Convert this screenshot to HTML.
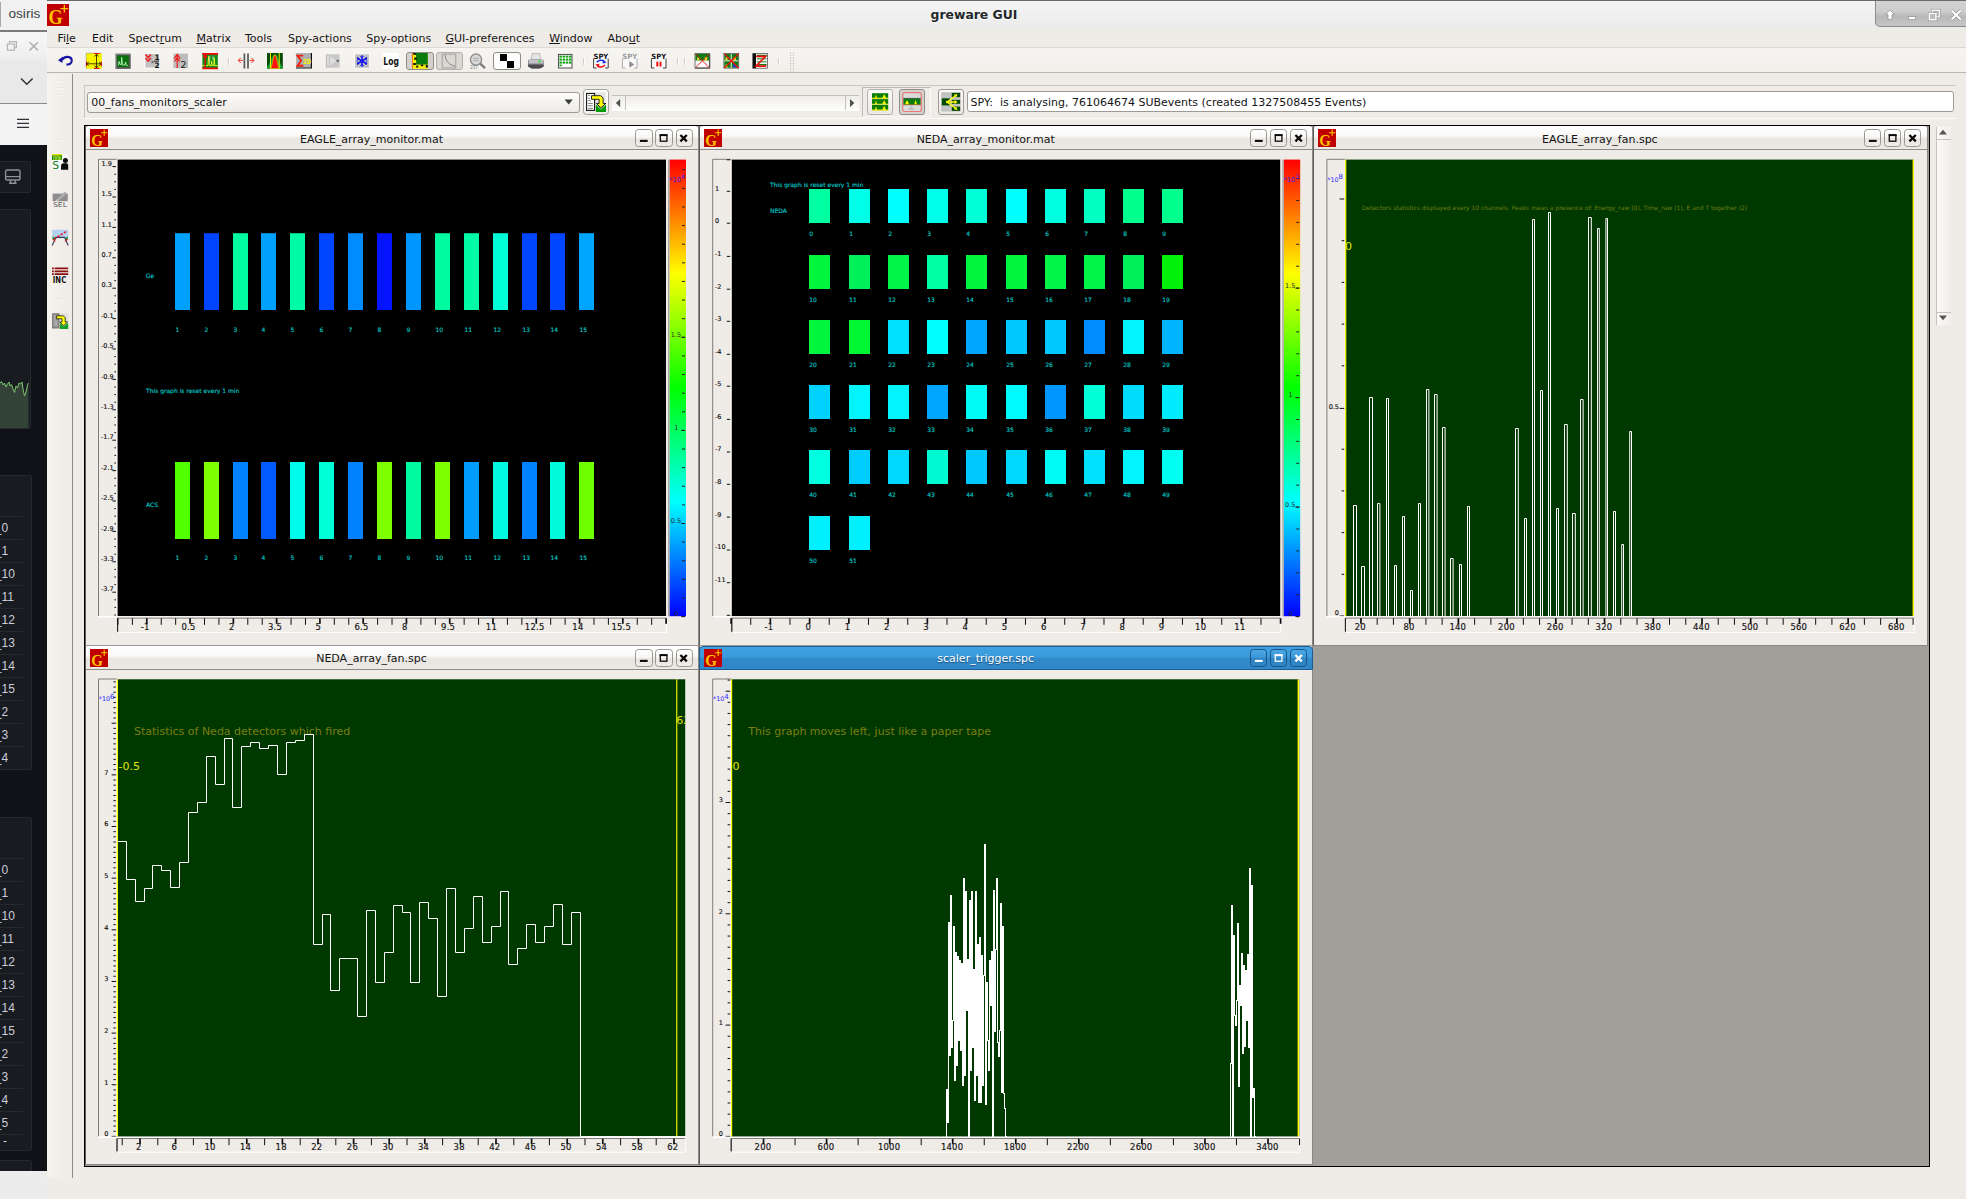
<!DOCTYPE html>
<html><head><meta charset="utf-8"><title>greware GUI</title>
<style>
*{box-sizing:border-box;margin:0;padding:0}
html,body{width:1966px;height:1199px;overflow:hidden}
body{position:relative;background:#efebe7;font-family:"DejaVu Sans","Liberation Sans",sans-serif;font-size:13px;color:#1a1a1a}
.a{position:absolute}
svg{position:absolute;overflow:visible}
svg text{font-family:"DejaVu Sans","Liberation Sans",sans-serif}
.lib{font-family:"Liberation Sans",sans-serif}
u{text-decoration:underline;text-underline-offset:1px}
</style></head><body>
<div class="a" style="left:0;top:0;width:47px;height:30px;background:#f1f1f1"></div>
<div class="a" style="left:0;top:2px;width:1px;height:25px;background:#a8a8a8"></div>
<div class="a lib" style="left:8.5px;top:6px;font-size:13.6px;line-height:16px;color:#3c4043">osiris</div>
<div class="a" style="left:0;top:30px;width:47px;height:1.5px;background:#7a7a7a"></div>
<div class="a" style="left:0;top:31.5px;width:47px;height:72px;background:linear-gradient(#f6f6f6 0,#f1f1f1 30%,#e9e9e9 42%,#e9e9e9 100%)"></div>
<svg style="left:0;top:31px" width="47" height="72" viewBox="0 31 47 72" fill="none"><path d="M9.5 43.5V41.6H16.4V47.6H14.5" stroke="#b4b4b4" stroke-width="1.2"/><rect x="7.4" y="44" width="7" height="6.2" stroke="#b4b4b4" stroke-width="1.2"/><path d="M29.5 42.2L38 50.4M38 42.2L29.5 50.4" stroke="#b0b0b0" stroke-width="1.5"/><path d="M21 78.5L26.8 84.3L32.6 78.5" stroke="#2f3337" stroke-width="1.5"/></svg>
<div class="a" style="left:0;top:103px;width:47px;height:1px;background:#8a8a8a"></div>
<div class="a" style="left:0;top:104px;width:47px;height:41px;background:#f4f4f4"></div>
<svg style="left:0;top:104px" width="47" height="41" viewBox="0 104 47 41"><path d="M17 119.4H29M17 123.4H29M17 127.4H29" stroke="#2f3337" stroke-width="1.4"/></svg>
<div class="a" style="left:0;top:145px;width:47px;height:1026px;background:#111217"></div>
<div class="a" style="left:0;top:1171px;width:47px;height:28px;background:#ececec"></div>
<div class="a" style="left:-2px;top:161px;width:33px;height:32px;background:#181b1f;border:1px solid #25282d;border-radius:2px"></div>
<svg style="left:0;top:161px" width="31" height="32" viewBox="0 161 31 32" fill="none" stroke="#8e9099" stroke-width="1.4"><rect x="5.6" y="170" width="14.4" height="10" rx="1.8"/><path d="M5.6 176.6H20M10.5 180.2V183M15.2 180.2V183M9 183.3H16.6"/></svg>
<div class="a" style="left:-2px;top:209px;width:33px;height:220px;background:#181b1f;border:1px solid #25282d;border-radius:2px"></div>
<svg style="left:0;top:370px" width="30" height="58" viewBox="0 370 30 58"><polygon points="0,383 1.5,381.5 3,385 4.5,383 6,387 7.5,384 9,382 10,386 11.5,384.5 13,389 14.5,392.5 16,386 17.5,388 19,383 20.5,384 22,382 23,389 24.5,396 26,392 27.5,385 28.5,383 28.5,428 0,428" fill="#334236"/><polyline points="0,383 1.5,381.5 3,385 4.5,383 6,387 7.5,384 9,382 10,386 11.5,384.5 13,389 14.5,392.5 16,386 17.5,388 19,383 20.5,384 22,382 23,389 24.5,396 26,392 27.5,385 28.5,383" fill="none" stroke="#7dc26f" stroke-width="1"/></svg>
<div class="a" style="left:-2px;top:475px;width:33.5px;height:294.5px;background:#181b1f;border:1px solid #25282d;border-radius:2px"></div>
<div class="a" style="left:0;top:515.5px;width:23px;height:1px;background:#26292e"></div>
<div class="a lib" style="left:-5.2px;top:520.9px;font-size:12px;line-height:14px;color:#ccccdc;white-space:nowrap">_0</div>
<div class="a" style="left:0;top:538.5px;width:23px;height:1px;background:#26292e"></div>
<div class="a lib" style="left:-5.2px;top:543.9px;font-size:12px;line-height:14px;color:#ccccdc;white-space:nowrap">_1</div>
<div class="a" style="left:0;top:561.5px;width:23px;height:1px;background:#26292e"></div>
<div class="a lib" style="left:-5.2px;top:566.9px;font-size:12px;line-height:14px;color:#ccccdc;white-space:nowrap">_10</div>
<div class="a" style="left:0;top:584.5px;width:23px;height:1px;background:#26292e"></div>
<div class="a lib" style="left:-5.2px;top:589.9px;font-size:12px;line-height:14px;color:#ccccdc;white-space:nowrap">_11</div>
<div class="a" style="left:0;top:607.5px;width:23px;height:1px;background:#26292e"></div>
<div class="a lib" style="left:-5.2px;top:612.9px;font-size:12px;line-height:14px;color:#ccccdc;white-space:nowrap">_12</div>
<div class="a" style="left:0;top:630.5px;width:23px;height:1px;background:#26292e"></div>
<div class="a lib" style="left:-5.2px;top:635.9px;font-size:12px;line-height:14px;color:#ccccdc;white-space:nowrap">_13</div>
<div class="a" style="left:0;top:653.5px;width:23px;height:1px;background:#26292e"></div>
<div class="a lib" style="left:-5.2px;top:658.9px;font-size:12px;line-height:14px;color:#ccccdc;white-space:nowrap">_14</div>
<div class="a" style="left:0;top:676.5px;width:23px;height:1px;background:#26292e"></div>
<div class="a lib" style="left:-5.2px;top:681.9px;font-size:12px;line-height:14px;color:#ccccdc;white-space:nowrap">_15</div>
<div class="a" style="left:0;top:699.5px;width:23px;height:1px;background:#26292e"></div>
<div class="a lib" style="left:-5.2px;top:704.9px;font-size:12px;line-height:14px;color:#ccccdc;white-space:nowrap">_2</div>
<div class="a" style="left:0;top:722.5px;width:23px;height:1px;background:#26292e"></div>
<div class="a lib" style="left:-5.2px;top:727.9px;font-size:12px;line-height:14px;color:#ccccdc;white-space:nowrap">_3</div>
<div class="a" style="left:0;top:745.5px;width:23px;height:1px;background:#26292e"></div>
<div class="a lib" style="left:-5.2px;top:750.9px;font-size:12px;line-height:14px;color:#ccccdc;white-space:nowrap">_4</div>
<div class="a" style="left:-2px;top:817px;width:33.5px;height:333.5px;background:#181b1f;border:1px solid #25282d;border-radius:2px"></div>
<div class="a" style="left:0;top:857.8px;width:23px;height:1px;background:#26292e"></div>
<div class="a lib" style="left:-5.2px;top:863.2px;font-size:12px;line-height:14px;color:#ccccdc;white-space:nowrap">_0</div>
<div class="a" style="left:0;top:880.8px;width:23px;height:1px;background:#26292e"></div>
<div class="a lib" style="left:-5.2px;top:886.2px;font-size:12px;line-height:14px;color:#ccccdc;white-space:nowrap">_1</div>
<div class="a" style="left:0;top:903.8px;width:23px;height:1px;background:#26292e"></div>
<div class="a lib" style="left:-5.2px;top:909.2px;font-size:12px;line-height:14px;color:#ccccdc;white-space:nowrap">_10</div>
<div class="a" style="left:0;top:926.8px;width:23px;height:1px;background:#26292e"></div>
<div class="a lib" style="left:-5.2px;top:932.2px;font-size:12px;line-height:14px;color:#ccccdc;white-space:nowrap">_11</div>
<div class="a" style="left:0;top:949.8px;width:23px;height:1px;background:#26292e"></div>
<div class="a lib" style="left:-5.2px;top:955.2px;font-size:12px;line-height:14px;color:#ccccdc;white-space:nowrap">_12</div>
<div class="a" style="left:0;top:972.8px;width:23px;height:1px;background:#26292e"></div>
<div class="a lib" style="left:-5.2px;top:978.2px;font-size:12px;line-height:14px;color:#ccccdc;white-space:nowrap">_13</div>
<div class="a" style="left:0;top:995.8px;width:23px;height:1px;background:#26292e"></div>
<div class="a lib" style="left:-5.2px;top:1001.2px;font-size:12px;line-height:14px;color:#ccccdc;white-space:nowrap">_14</div>
<div class="a" style="left:0;top:1018.8px;width:23px;height:1px;background:#26292e"></div>
<div class="a lib" style="left:-5.2px;top:1024.2px;font-size:12px;line-height:14px;color:#ccccdc;white-space:nowrap">_15</div>
<div class="a" style="left:0;top:1041.8px;width:23px;height:1px;background:#26292e"></div>
<div class="a lib" style="left:-5.2px;top:1047.2px;font-size:12px;line-height:14px;color:#ccccdc;white-space:nowrap">_2</div>
<div class="a" style="left:0;top:1064.8px;width:23px;height:1px;background:#26292e"></div>
<div class="a lib" style="left:-5.2px;top:1070.2px;font-size:12px;line-height:14px;color:#ccccdc;white-space:nowrap">_3</div>
<div class="a" style="left:0;top:1087.8px;width:23px;height:1px;background:#26292e"></div>
<div class="a lib" style="left:-5.2px;top:1093.2px;font-size:12px;line-height:14px;color:#ccccdc;white-space:nowrap">_4</div>
<div class="a" style="left:0;top:1110.8px;width:23px;height:1px;background:#26292e"></div>
<div class="a lib" style="left:-5.2px;top:1116.2px;font-size:12px;line-height:14px;color:#ccccdc;white-space:nowrap">_5</div>
<div class="a" style="left:0;top:1133.8px;width:23px;height:1px;background:#26292e"></div>
<div class="a lib" style="left:3px;top:1134px;font-size:12px;line-height:14px;color:#ccccdc">-</div>
<div class="a" style="left:-2px;top:1159.5px;width:33.5px;height:14px;background:#181b1f;border:1px solid #25282d;border-radius:2px"></div>
<div class="a" style="left:0;top:1170.7px;width:47px;height:29px;background:#ececec"></div>
<div class="a" style="left:47px;top:0;width:1919px;height:28.5px;background:linear-gradient(#f4f4f4 0,#f0f0f0 45%,#ebebea 100%)"></div>
<div class="a" style="left:47px;top:0;width:1919px;height:1px;background:#6a6a6a"></div>
<div class="a" style="left:774px;top:7px;width:400px;text-align:center;font-weight:bold;font-size:12.4px;line-height:16px;color:#23272a;text-shadow:0 1px 0 #fff">greware GUI</div>
<div class="a" style="left:1875px;top:1px;width:100px;height:25.5px;border:1px solid #8c8c8c;border-top:none;border-radius:0 0 0 5px;background:linear-gradient(#d2d2d2 0,#cdcdcd 40%,#b9b9b9 62%,#c6c6c6 100%)"></div>
<svg style="left:1875px;top:0" width="91" height="28" viewBox="1875 0 91 28"><path d="M1890 10L1885.4 14.6H1888V19.4H1892V14.6H1894.6Z" fill="#fff" stroke="#8a8a8a" stroke-width="0.7" stroke-linejoin="round"/><rect x="1908.3" y="16.5" width="7.4" height="3" fill="#fff" stroke="#8a8a8a" stroke-width="0.7"/><rect x="1932.4" y="10.2" width="6.8" height="6.6" fill="none" stroke="#8a8a8a" stroke-width="2.5"/><rect x="1932.4" y="10.2" width="6.8" height="6.6" fill="none" stroke="#fff" stroke-width="1.4"/><rect x="1929.2" y="13.4" width="6.8" height="6.4" fill="#c4c4c4" stroke="#8a8a8a" stroke-width="2.5"/><rect x="1929.2" y="13.4" width="6.8" height="6.4" fill="#bcbcbc" stroke="#fff" stroke-width="1.4"/><path d="M1951.6 10.4L1960.8 19.6M1960.8 10.4L1951.6 19.6" stroke="#8a8a8a" stroke-width="3.2"/><path d="M1951.6 10.4L1960.8 19.6M1960.8 10.4L1951.6 19.6" stroke="#fff" stroke-width="2.1"/></svg>
<svg style="left:47px;top:4px" width="22" height="22" viewBox="0 0 22 22"><g transform="translate(0,0) scale(1.22222)"><rect x="0" y="0" width="18" height="18" fill="#c00000"/><text x="1.2" y="16.6" font-family="'Liberation Serif',serif" font-size="17.5" font-weight="bold" fill="#ffc400" textLength="11.6" lengthAdjust="spacingAndGlyphs" style="font-family:'Liberation Serif',serif">G</text><path d="M14.2 0.6V7M11 3.8H17.4" stroke="#ffc400" stroke-width="1.1"/></g></svg>
<div class="a" style="left:47px;top:28.5px;width:1919px;height:19px;background:#efebe7"></div>
<div class="a" style="left:57.4px;top:32px;font-size:11px;line-height:14px;white-space:nowrap;color:#141414">Fi<u>l</u>e</div>
<div class="a" style="left:92px;top:32px;font-size:11px;line-height:14px;white-space:nowrap;color:#141414">Edit</div>
<div class="a" style="left:128.6px;top:32px;font-size:11px;line-height:14px;white-space:nowrap;color:#141414">Spect<u>r</u>um</div>
<div class="a" style="left:196.4px;top:32px;font-size:11px;line-height:14px;white-space:nowrap;color:#141414"><u>M</u>atrix</div>
<div class="a" style="left:245px;top:32px;font-size:11px;line-height:14px;white-space:nowrap;color:#141414">Tools</div>
<div class="a" style="left:288px;top:32px;font-size:11px;line-height:14px;white-space:nowrap;color:#141414">Spy-actions</div>
<div class="a" style="left:366.2px;top:32px;font-size:11px;line-height:14px;white-space:nowrap;color:#141414">Spy-options</div>
<div class="a" style="left:445.5px;top:32px;font-size:11px;line-height:14px;white-space:nowrap;color:#141414"><u>G</u>UI-preferences</div>
<div class="a" style="left:549.2px;top:32px;font-size:11px;line-height:14px;white-space:nowrap;color:#141414"><u>W</u>indow</div>
<div class="a" style="left:607.6px;top:32px;font-size:11px;line-height:14px;white-space:nowrap;color:#141414">Abo<u>u</u>t</div>
<div class="a" style="left:47px;top:47px;width:1919px;height:25.6px;background:linear-gradient(#f7f5f1,#f3f0ec);border-top:1px solid #dcd8d3;border-bottom:1px solid #b9b5b0"></div>
<div class="a" style="left:406px;top:52px;width:28px;height:18px;border:1px solid #8f8c88;border-radius:3px;background:#d4d1cd"></div>
<div class="a" style="left:435.5px;top:52px;width:27.5px;height:18px;border:1px solid #b3b0ac;border-radius:3px;background:#dbd8d4"></div>
<div class="a" style="left:493px;top:52px;width:28px;height:18px;border:1px solid #8f8c88;border-radius:3px;background:#fdfdfd"></div>
<svg style="left:0;top:48px" width="1966" height="25" viewBox="0 48 1966 25"><g transform="translate(57,53) scale(1)"><path d="M1 7.3L5.8 3.4L5.4 9.9Z" fill="#1414a0"/><path d="M5 6.9C6.6 4.6 8.8 3.8 10.6 3.9C13.4 4.2 14.9 6 14.7 7.9C14.4 10.2 12.6 11.8 9.4 11.4" stroke="#1414a0" stroke-width="2.1" fill="none"/></g><g transform="translate(86,53) scale(1)"><rect x="0" y="0" width="15.8" height="15.8" fill="#f8f400"/><path d="M0.2 15.8V0.2H15.8" stroke="#8a8aa8" stroke-width="0.5" fill="none"/><path d="M8 0.5H13.4M8 15.4H13.4M0.5 8.4V13.2M15.4 8.4V13.2" stroke="#f01010" stroke-width="1.1"/><path d="M10.5 1.2V14.8M0.6 10.8H15.2M8.6 3.4L10.5 1.2L12.4 3.4M8.6 12.6L10.5 14.8L12.4 12.6M2.8 9L0.6 10.8L2.8 12.6M13 9L15.2 10.8L13 12.6" stroke="#141400" stroke-width="0.8" fill="none"/></g><g transform="translate(115.5,53) scale(1)"><rect x="0.2" y="0.9" width="15" height="15" fill="#5a5a5a"/><path d="M0.2 15.9V0.9H15.2" stroke="#a8a8a8" stroke-width="1.2" fill="none"/><rect x="1.7" y="2.4" width="11.6" height="11.6" fill="#0a700c"/><path d="M2.8 12.4L3.6 8.4L4.6 11.6H5.8L6.2 4.4L7 12H9.6L10 9L10.8 12.4H12.4" stroke="#c8ffc8" stroke-width="0.8" fill="none"/></g><g transform="translate(144.4,53) scale(1)"><rect x="0.6" y="0.6" width="14.6" height="14.4" fill="#c2c2c2" stroke="#fff" stroke-width="0.8"/><path d="M1 1.4L3.8 4.6L6.6 1.4M1 5L3.8 8.2L6.6 5" stroke="#f01818" stroke-width="1.5" fill="none"/><text x="10" y="7.4" font-size="7.4" font-weight="bold" fill="#111">1</text><text x="10" y="15" font-size="7.4" font-weight="bold" fill="#111">2</text><path d="M9.6 8.2H14.8" stroke="#111" stroke-width="0.9"/><path d="M7 7.8L9.2 10.2M9.2 7.8L7 10.2" stroke="#333" stroke-width="0.7"/></g><g transform="translate(173,53) scale(1)"><rect x="0.4" y="0.6" width="14.6" height="14.6" fill="#bcbcbc"/><path d="M4.2 15V1.4M1.2 5.6L4.2 1.2L7.2 5.6M1.6 8.4L4.2 4.8L6.8 8.4" stroke="#f01818" stroke-width="1.2" fill="none"/><text x="7.6" y="14.8" font-size="9.4" fill="#1a1a1a">2</text></g><g transform="translate(202,53) scale(1)"><rect x="0.4" y="1" width="15.4" height="14" fill="#0e8a14"/><path d="M0.2 0.9H16M0.2 15.3H16" stroke="#f00808" stroke-width="1.7"/><path d="M3.2 1.4V15M1.2 4.4L3.2 1.6L5.2 4.4" stroke="#f00808" stroke-width="1.3" fill="none"/><path d="M0.4 12.6H2.4M4 12.6H6L6.6 3.4L7.4 12.6H9.2L9.6 8L10.2 12.6H11.8L12.2 4.6L12.8 12.6H15.6" stroke="#f0ff30" stroke-width="0.9" fill="none"/><path d="M7.8 2.6V9M11 2.6V7" stroke="#e8e8e8" stroke-width="0.7"/></g><g transform="translate(238,53) scale(1)"><path d="M6.4 0.4V15.6M10 0.4V15.6" stroke="#585858" stroke-width="1.7"/><path d="M0.3 7.4H4.9M15.9 7.4H11.6M2.8 4.8L0.3 7.4L2.8 10M13.4 4.8L15.9 7.4L13.4 10" stroke="#f01818" stroke-width="0.9" fill="none"/></g><g transform="translate(267,53) scale(1)"><rect x="0" y="0" width="15.8" height="15.6" fill="#064a08"/><path d="M0 15.6V13.4C3 12.6 4.4 1 7.9 1S12.8 12.6 15.8 13.4V15.6Z" fill="#18a028"/><path d="M3.5 0V15.6M12.2 0V15.6" stroke="#f0f000" stroke-width="1"/><path d="M3.6 15.6C5.6 12 6.2 1.8 7.9 1.8S10.2 12 12.2 15.6Z" fill="#ff1010" stroke="#f0e000" stroke-width="0.6"/></g><g transform="translate(295.8,53) scale(1)"><rect x="0.3" y="0" width="15.3" height="14.6" fill="#b0b0b0"/><path d="M0.2 15H15.6V0" stroke="#111" stroke-width="1.2" fill="none"/><path d="M7.4 2.6H1.6L5.4 7.6L1.6 12.8H7.6" stroke="#f02010" stroke-width="1.9" fill="none"/><text x="7.2" y="10.8" font-size="7" font-weight="bold" fill="#f4f400" textLength="8" lengthAdjust="spacingAndGlyphs">2D</text></g><g transform="translate(325.5,53) scale(1)"><rect x="0.3" y="1.3" width="13.8" height="13.4" fill="#c8c8c8"/><rect x="1.5" y="2" width="2" height="11.4" fill="#eeeeee" stroke="#a0a0a0" stroke-width="0.5"/><path d="M4.4 3L11 7.9L4.4 12.8Z" fill="#dedede"/><rect x="11" y="6.8" width="2.6" height="2" fill="#6a6a6a"/></g><g transform="translate(354,53) scale(1)"><rect x="0.6" y="0.8" width="14.8" height="14.4" fill="#c0c0c0" stroke="#fff" stroke-width="0.9"/><g stroke="#1818f0" stroke-width="1.5" fill="none"><path d="M8 2.2V13.8M3 5L13 11M13 5L3 11"/><path d="M6.4 3.2L8 4.8L9.6 3.2M6.4 12.8L8 11.2L9.6 12.8M2.8 7.4L5 6.2L3.6 4M13.2 7.4L11 6.2L12.4 4M2.8 8.6L5 9.8L3.6 12M13.2 8.6L11 9.8L12.4 12" stroke-width="1"/></g><circle cx="8" cy="8" r="1.6" fill="#1818f0"/></g><g transform="translate(382.8,53) scale(1)"><rect x="0.3" y="0" width="16" height="16" fill="#ffffff"/><text x="0.5" y="11.9" font-size="9.8" font-weight="bold" fill="#111" textLength="15.6" lengthAdjust="spacingAndGlyphs">Log</text></g><g transform="translate(411.8,53) scale(1)"><rect x="0.3" y="0" width="15.7" height="15.8" fill="#f4f000"/><rect x="4.3" y="0" width="11.7" height="11.6" fill="#0a7c0e"/><path d="M0.6 0V15.8" stroke="#f01010" stroke-width="0.6"/><rect x="1.4" y="0" width="3" height="1.8" fill="#111"/><rect x="2.4" y="4.6" width="2.6" height="2.2" fill="#111"/><rect x="1.4" y="10" width="2.6" height="2" fill="#111"/><rect x="4.4" y="12.6" width="2" height="2" fill="#111"/><rect x="9" y="11.6" width="2.4" height="1.6" fill="#111"/><rect x="14" y="12" width="2" height="2.6" fill="#111"/></g><g transform="translate(441.6,53.2) scale(1)"><rect x="0.6" y="0.9" width="13.6" height="13.8" fill="none" stroke="#9c9a98" stroke-width="0.9"/><path d="M3.4 1.4C4 8 7.4 12 13.6 12.8" stroke="#8c8a88" stroke-width="1" fill="none"/></g><g transform="translate(469.4,53) scale(1)"><circle cx="6.6" cy="6.6" r="5.6" fill="#dadada" stroke="#8e8e8e" stroke-width="1.4"/><path d="M10.8 10.6L15.6 15.2" stroke="#7e7e7e" stroke-width="2.4"/><text x="0.4" y="16.4" font-size="5.4" fill="#8a8a8a">2D</text><path d="M3.6 5.4H9.6M3.6 7.6H9.6" stroke="#b4b4b4" stroke-width="1.2"/></g><g transform="translate(500,54) scale(1)"><rect x="0" y="0" width="14" height="14" fill="#fff"/><rect x="0" y="0" width="7" height="7" fill="#000"/><rect x="7" y="7" width="7" height="7" fill="#000"/></g><g transform="translate(527.8,53) scale(1)"><path d="M4.4 0.6H11.8L12.8 6.6H3.2Z" fill="#e6e6e6" stroke="#9a9a9a" stroke-width="0.6"/><path d="M1.4 6.4Q0.2 6.6 0.2 8V12.6Q0.2 14 1.6 14.2L4 15.6H12L14.6 14.2Q16 14 16 12.6V8Q16 6.6 14.6 6.4Z" fill="#8e8e92"/><path d="M1.2 7H15V10.4H1.2Z" fill="#c2c2c8"/><path d="M0.4 11.4H15.8V13.4Q15.8 14.2 14.6 14.2L12 15.6H4L1.6 14.2Q0.4 14.2 0.4 13.4Z" fill="#4a4a50"/><circle cx="11.6" cy="8.4" r="1.2" fill="#30e040"/></g><g transform="translate(558,54) scale(1)"><rect x="0.4" y="0.4" width="13.6" height="13.6" fill="#fdfdfd" stroke="#3c3c3c" stroke-width="0.9"/><g fill="#12a012"><rect x="1.4" y="1.6" width="2.5" height="2"/><rect x="4.6" y="1.6" width="2.5" height="2"/><rect x="7.8" y="1.6" width="2.5" height="2"/><rect x="11" y="1.6" width="2.5" height="2"/><rect x="1.4" y="4.6" width="2.5" height="2"/><rect x="4.6" y="4.6" width="2.5" height="2"/><rect x="7.8" y="4.6" width="2.5" height="2"/><rect x="11" y="4.6" width="2.5" height="2"/><rect x="1.4" y="7.6" width="2.5" height="2"/><rect x="4.6" y="7.6" width="2.5" height="2"/><rect x="7.8" y="7.6" width="2.5" height="2"/><rect x="11" y="7.6" width="2.5" height="2"/><rect x="1.4" y="10.6" width="2.5" height="1.6"/></g></g><g transform="translate(593.2,53) scale(1)"><rect x="0.4" y="0.4" width="14.6" height="14.8" fill="#f8f8f8"/><path d="M0.4 5.6V15H3.4M15 5.6V15H12" stroke="#111" stroke-width="0.8" fill="none"/><text x="0.3" y="6.3" font-size="7.2" font-weight="bold" fill="#111" textLength="14.8" lengthAdjust="spacingAndGlyphs">SPY</text><path d="M3.6 9.4C5.2 6.8 9.4 6.8 11.2 8.6" stroke="#1a2ce0" stroke-width="1.5" fill="none"/><path d="M10 6.8L13.4 9.8L9.4 10.6Z" fill="#1a2ce0"/><path d="M11.6 11.8C10 14.6 5.8 14.6 4.2 12.8" stroke="#f01010" stroke-width="1.5" fill="none"/><path d="M5.6 14.6L2 11.6L6.2 10.8Z" fill="#f01010"/></g><g transform="translate(622,53) scale(1)"><rect x="0.4" y="0.4" width="14.6" height="14.8" fill="#f8f8f8"/><path d="M0.4 5.6V15H3.4M15 5.6V15H12" stroke="#9a9a9a" stroke-width="0.8" fill="none"/><text x="0.3" y="6.3" font-size="7.2" font-weight="bold" fill="#9a9a9a" textLength="14.8" lengthAdjust="spacingAndGlyphs">SPY</text><path d="M7.4 8L12.2 11.4L7.4 14.8Z" fill="#8a8a8a"/></g><g transform="translate(651,53) scale(1)"><rect x="0.4" y="0.4" width="14.6" height="14.8" fill="#f8f8f8"/><path d="M0.4 5.6V15H3.4M15 5.6V15H12" stroke="#111" stroke-width="0.8" fill="none"/><text x="0.3" y="6.3" font-size="7.2" font-weight="bold" fill="#111" textLength="14.8" lengthAdjust="spacingAndGlyphs">SPY</text><path d="M6.3 8.8V13.4M9.5 8.8V13.4" stroke="#f01010" stroke-width="2"/></g><g transform="translate(694.6,53) scale(1)"><rect x="0.4" y="0.5" width="14.6" height="14.4" fill="#fafafa" stroke="#555" stroke-width="0.8"/><rect x="0.8" y="0.9" width="13.8" height="6.6" fill="#0e7e14"/><path d="M2.6 7.5V4.4H4.6V7.5M10 7.5V4H12.6V7.5" fill="#e8e020"/><path d="M0.6 15.2H15.2V0.8" stroke="#444" stroke-width="0.9" fill="none"/><path d="M1 1L14.6 14.6M14.6 1L1 14.6" stroke="#f01010" stroke-width="0.9"/></g><g transform="translate(723.5,53) scale(1)"><rect x="0.4" y="0.5" width="14.8" height="14.6" fill="#f4f4f4" stroke="#555" stroke-width="0.8"/><rect x="0.8" y="0.9" width="6.4" height="6.4" fill="#0e7e14"/><rect x="8.2" y="0.9" width="6.6" height="6.4" fill="#0e7e14"/><rect x="0.8" y="8.3" width="6.4" height="6.4" fill="#0e7e14"/><rect x="8.2" y="8.3" width="6.6" height="6.4" fill="#0e7e14"/><path d="M2 7.3V4.4H4V7.3M10 7.3V4H12.4V7.3M2 14.7V11.6H4V14.7" fill="#e8e020"/><path d="M9.6 14.2V10L13.4 14.2Z" fill="#1a30e0"/><path d="M0.8 0.8L15 15M15 0.8L0.8 15" stroke="#f01010" stroke-width="1.3"/></g><g transform="translate(752.6,53) scale(1)"><rect x="0.2" y="0.6" width="14.8" height="14.6" fill="#f6f6f6" stroke="#444" stroke-width="0.7"/><rect x="0.2" y="0.6" width="3.2" height="14.6" fill="#0c0c0c"/><path d="M4.4 2.6H14M4.4 11.8H14" stroke="#0e7e14" stroke-width="1.6"/><path d="M4.4 5.6H14M4.4 8.8H14" stroke="#58b060" stroke-width="1.6"/><path d="M3.6 3.4H12.8L3.4 13.2H13.6" stroke="#f01010" stroke-width="1.7" fill="none"/></g><path d="M228.4 58V65" stroke="#cfcbc6" stroke-width="1"/><path d="M229.4 58V65" stroke="#fff" stroke-width="1"/><path d="M583.6 58V65" stroke="#cfcbc6" stroke-width="1"/><path d="M584.6 58V65" stroke="#fff" stroke-width="1"/><path d="M677.6 58V65" stroke="#cfcbc6" stroke-width="1"/><path d="M678.6 58V65" stroke="#fff" stroke-width="1"/><path d="M684.6 58V65" stroke="#cfcbc6" stroke-width="1"/><path d="M685.6 58V65" stroke="#fff" stroke-width="1"/><path d="M778.6 58V65" stroke="#cfcbc6" stroke-width="1"/><path d="M779.6 58V65" stroke="#fff" stroke-width="1"/><rect x="790.2" y="52.6" width="1" height="1" fill="#b0aca7"/><rect x="792.8" y="52.6" width="1" height="1" fill="#b0aca7"/><rect x="790.2" y="55.15" width="1" height="1" fill="#b0aca7"/><rect x="792.8" y="55.15" width="1" height="1" fill="#b0aca7"/><rect x="790.2" y="57.7" width="1" height="1" fill="#b0aca7"/><rect x="792.8" y="57.7" width="1" height="1" fill="#b0aca7"/><rect x="790.2" y="60.25" width="1" height="1" fill="#b0aca7"/><rect x="792.8" y="60.25" width="1" height="1" fill="#b0aca7"/><rect x="790.2" y="62.8" width="1" height="1" fill="#b0aca7"/><rect x="792.8" y="62.8" width="1" height="1" fill="#b0aca7"/><rect x="790.2" y="65.35" width="1" height="1" fill="#b0aca7"/><rect x="792.8" y="65.35" width="1" height="1" fill="#b0aca7"/><rect x="790.2" y="67.9" width="1" height="1" fill="#b0aca7"/><rect x="792.8" y="67.9" width="1" height="1" fill="#b0aca7"/><rect x="790.2" y="70.45" width="1" height="1" fill="#b0aca7"/><rect x="792.8" y="70.45" width="1" height="1" fill="#b0aca7"/></svg>
<div class="a" style="left:47px;top:73.5px;width:25.5px;height:1104.5px;background:linear-gradient(90deg,#f6f2ec,#f1ede8 60%,#efebe7);border-right:1px solid #8e8b87"></div>
<svg style="left:0;top:73px" width="80" height="300" viewBox="0 73 80 300"><path d="M57 81.6H63.4" stroke="#fff" stroke-width="1"/><path d="M57 80.8H63.4" stroke="#dcd8d3" stroke-width="0.6"/><path d="M57 88.6H63.4" stroke="#fff" stroke-width="1"/><path d="M57 87.8H63.4" stroke="#dcd8d3" stroke-width="0.6"/><path d="M57 95.6H63.4" stroke="#fff" stroke-width="1"/><path d="M57 94.8H63.4" stroke="#dcd8d3" stroke-width="0.6"/><path d="M57 140.6H63.4" stroke="#fff" stroke-width="1"/><path d="M57 139.8H63.4" stroke="#dcd8d3" stroke-width="0.6"/><path d="M57 299.8H63.4" stroke="#fff" stroke-width="1"/><path d="M57 299H63.4" stroke="#dcd8d3" stroke-width="0.6"/><g transform="translate(52,154) scale(1)"><rect x="0" y="0" width="16.2" height="16" fill="#f6f6f6"/><rect x="0" y="0" width="10" height="6" fill="#0e7e14"/><path d="M0 0.7H10" stroke="#f0e800" stroke-width="1.4"/><path d="M1.6 6V2.4H3.4V6M4.8 6V2H6.2V6M7.4 6V2.8H8.8V6" stroke="#e8ff30" stroke-width="0.7" fill="none"/><text x="0.3" y="15.4" font-size="10.8" fill="#0e7e14">S</text><circle cx="13.4" cy="6.4" r="2.5" fill="#0a0a0a"/><path d="M9 15.8V12.4Q9 9.2 11.6 9.2H14.4Q16.2 9.2 16.2 11V15.8Z" fill="#0a0a0a"/></g><g transform="translate(52.2,191.6) scale(1)"><rect x="0.4" y="2" width="15.2" height="7.6" fill="#8e8e8e"/><path d="M10.4 2L12.4 0.4L14.6 2Z" fill="#8e8e8e"/><path d="M3.8 8.8L11.8 1.2L13.4 2.8L5.4 9.6Z" fill="#b4b4b4"/><path d="M3.6 9.2L4.2 7.8L5.2 9Z" fill="#f4f4f4"/><text x="0.8" y="15.9" font-size="6.4" fill="#555" textLength="14" lengthAdjust="spacingAndGlyphs">SEL</text></g><g transform="translate(52.2,229.8) scale(1)"><rect x="0" y="0" width="16" height="8.4" fill="#b4d2f0"/><path d="M0 15.6L3.6 7.6H12.4L16 15.6" stroke="#3a3a5a" stroke-width="1.1" fill="none"/><path d="M2 9L14.4 1.4" stroke="#e01020" stroke-width="1.6" stroke-dasharray="2.4 1.4"/><path d="M0.4 6.4L3 8.8L0.4 10.4ZM15.6 6.4L13 8.8L15.6 10.4Z" fill="#18902a"/><path d="M1 9.4L3 11.6M15 9.4L13 11.6" stroke="#e01020" stroke-width="1.2"/></g><g transform="translate(52,267.4) scale(1)"><path d="M2.6 1H16.2M2.6 3.9H16.2M2.6 6.8H16.2" stroke="#8a1010" stroke-width="1.7"/><path d="M0 1H1.8M0 3.9H1.8M0 6.8H1.8" stroke="#8a1010" stroke-width="1.7"/><text x="0.8" y="15.9" font-size="8" font-weight="bold" fill="#111" textLength="13.4" lengthAdjust="spacingAndGlyphs">INC</text></g><g transform="translate(52.2,313) scale(1)"><rect x="6.6" y="0.2" width="9.4" height="10" fill="#e0e0e0"/><rect x="0.5" y="0.8" width="6.2" height="14.2" fill="#9a9a9a" stroke="#666" stroke-width="0.9"/><path d="M2 3.2H5M2 5.8H5M2 8.4H5M2 11H5" stroke="#c8c8c8" stroke-width="0.8"/><path d="M4.2 2.8H11L13 4.6V9H15.4L11.4 12.6L7.6 9H9.8V5.8H4.2Z" fill="#ffff00" stroke="#111" stroke-width="0.8" stroke-linejoin="round"/><path d="M7.6 10.6H8.4L11.4 13.4L14.8 10.6H16V16H7.6Z" fill="#12a022"/></g></svg>
<div class="a" style="left:84px;top:85px;width:1872px;height:1px;background:#c9c5c0"></div>
<div class="a" style="left:84px;top:86px;width:1px;height:32px;background:#c9c5c0"></div>
<div class="a" style="left:84px;top:118px;width:1872px;height:1px;background:#fbfaf8"></div>
<div class="a" style="left:86.5px;top:91.5px;width:493px;height:21px;border:1px solid #9d9a96;border-radius:3px;background:linear-gradient(#fdfdfc,#f4f2ef 55%,#eeebe7)"></div>
<div class="a" style="left:91.3px;top:96px;font-size:11px;line-height:14px;white-space:nowrap;color:#141414">00_fans_monitors_scaler</div>
<svg style="left:560px;top:92px" width="20" height="20" viewBox="560 92 20 20"><path d="M564.6 99.6H572.8L568.7 104.4Z" fill="#3c3c3c"/></svg>
<div class="a" style="left:583.2px;top:89.2px;width:25.6px;height:25.7px;border:1px solid #a5a29e;border-radius:3.5px;background:linear-gradient(#ffffff,#fbfaf9 45%,#efece8)"></div>
<svg style="left:583px;top:89px" width="27" height="27" viewBox="583 89 27 27"><g transform="translate(586,92) scale(1)"><rect x="8.8" y="0.2" width="11" height="12.8" fill="#e4e4e4"/><rect x="0.6" y="1.4" width="8" height="17" fill="#fff" stroke="#111" stroke-width="1.1"/><path d="M2.2 3.4H3.9M2.2 6.3H3.9M2.2 8.6H4.8M2.2 11.4H6.8M2.2 13.7H6.8M2.2 16.4H6.8" stroke="#555" stroke-width="0.8"/><path d="M5.5 3.7H14.6L17.1 5.9V11.5H19.8L14.9 15.8L10.4 11.5H13.1V7.3H5.5Z" fill="#ffff00" stroke="#111" stroke-width="0.9" stroke-linejoin="round"/><path d="M9.9 13H11L14.9 16.6L19 13H20V19.9H9.9Z" fill="#009a00"/><path d="M10.6 13.4L14.9 17.4L19.4 13.4" stroke="#b8e8b8" stroke-width="0.6" fill="none"/></g></svg>
<div class="a" style="left:612px;top:95px;width:247px;height:15.5px;border-top:1px solid #c4c0bb;background:linear-gradient(#eeece8,#f7f6f4 50%,#ffffff)"></div>
<div class="a" style="left:625px;top:96px;width:1px;height:14px;background:#c4c0bb"></div>
<div class="a" style="left:844.5px;top:96px;width:1px;height:14px;background:#c4c0bb"></div>
<svg style="left:612px;top:92px" width="250" height="22" viewBox="612 92 250 22"><path d="M620.2 99L615.9 103.1L620.2 107.2Z" fill="#505050"/><path d="M850 99L854.3 103.1L850 107.2Z" fill="#505050"/></svg>
<div class="a" style="left:861.8px;top:87px;width:69.2px;height:29.5px;border-top:1px solid #bcb8b3;border-left:1px solid #bcb8b3;border-right:1px solid #fbfaf8;border-bottom:1px solid #fbfaf8"></div>
<div class="a" style="left:866.5px;top:89.2px;width:26px;height:25.8px;border:1px solid #b5b1ac;border-radius:3px;background:linear-gradient(#fbfaf9,#ebe8e4)"></div>
<div class="a" style="left:898.5px;top:89.2px;width:26px;height:25.8px;border:1px solid #8f8c88;border-radius:3px;background:#d6d3cf"></div>
<div class="a" style="left:937.5px;top:89.2px;width:26px;height:25.8px;border:1px solid #9d9a96;border-radius:3px;background:linear-gradient(#fbfaf9,#ebe8e4)"></div>
<svg style="left:860px;top:88px" width="110" height="30" viewBox="860 88 110 30"><g transform="translate(872,93.2) scale(1)"><rect x="0" y="0" width="16.2" height="5.2" fill="#0a7c0a"/><path d="M0 4.6 H3L4 1.2L5 4.6H10.4L12.2 0.8L14 4.6H16.2V5.5H0Z" fill="#f4f400"/><rect x="0" y="5.9" width="16.2" height="5.2" fill="#0a7c0a"/><path d="M0 10.5 H3L4 7.1L5 10.5H10.4L12.2 6.7L14 10.5H16.2V11.4H0Z" fill="#f4f400"/><rect x="0" y="11.8" width="16.2" height="5.2" fill="#0a7c0a"/><path d="M0 16.4 H3L4 13L5 16.4H10.4L12.2 12.6L14 16.4H16.2V17.3H0Z" fill="#f4f400"/></g><g transform="translate(902.2,92.2) scale(1)"><rect x="0.5" y="0.5" width="18.6" height="18.8" rx="2" fill="#dcdcdc" stroke="#e87878" stroke-width="1.2"/><path d="M1.2 6.2H18.4" stroke="#222" stroke-width="0.8"/><rect x="1.2" y="6.6" width="17.2" height="5.9" fill="#0a7c0a"/><path d="M2.8 12.3L4.2 8.6H5.4L7 12.3ZM12 12.3L13.4 7.6L14.8 12.3Z" fill="#f4f400"/><path d="M1.2 12.6H18.4" stroke="#a03a10" stroke-width="0.6"/><path d="M9.2 13.8L5.6 17.8H12.8Z" fill="#c0c0c0"/><path d="M5.6 2.6V4.4M15.6 1.6V5" stroke="#c4c4c4" stroke-width="0.7"/></g><g transform="translate(941.2,92.2) scale(1)"><rect x="0" y="0" width="19.5" height="19.3" fill="#c2c2c2"/><rect x="0.6" y="6.1" width="8.2" height="7.1" fill="#004a00"/><rect x="10.6" y="0.7" width="8.3" height="4.2" fill="#004a00"/><rect x="10.6" y="7.7" width="8.3" height="3.9" fill="#004a00"/><rect x="10.6" y="14.4" width="8.3" height="4.3" fill="#004a00"/><path d="M5.8 9.8L14.6 3.2M5.8 9.8H14.6M5.8 9.8L14.6 16.4" stroke="#ffff00" stroke-width="1.3"/><circle cx="6" cy="9.8" r="1.3" fill="#ffff00"/><path d="M16.2 1.8L12.6 2.6L15 5.4ZM16.4 9.8L13.4 7.8V11.8ZM16.2 17.8L12.6 17L15 14.2Z" fill="#ffff00"/></g></svg>
<div class="a" style="left:966.5px;top:91px;width:987px;height:21px;border:1px solid #9d9a96;border-radius:3px;background:#fff"></div>
<div class="a" style="left:970.6px;top:96px;font-size:11px;line-height:14px;white-space:pre;color:#141414">SPY:  is analysing, 761064674 SUBevents (created 1327508455 Events)</div>
<div class="a" style="left:84px;top:125px;width:1846px;height:1042px;background:#a09f9a;border:1px solid #000"></div>
<div class="a" style="left:84.5px;top:125.5px;width:614.7px;height:520.3px;background:#efebe7;border-left:1.5px solid #5e5c5a;border-top:1px solid #9c9a97;border-right:1px solid #8a8886;border-bottom:1px solid #8a8886"></div>
<div class="a" style="left:86px;top:126.4px;width:612.2px;height:24px;background:linear-gradient(#ffffff 0,#fbfaf9 40%,#f3f1ee 49%,#e9e6e2 53%,#ece9e5 100%);border-bottom:1px solid #8d8b88;border-radius:3px 3px 0 0"></div>
<svg style="left:90px;top:129.2px" width="18" height="18" viewBox="0 0 18 18"><g transform="translate(0,0) scale(1)"><rect x="0" y="0" width="18" height="18" fill="#c00000"/><text x="1.2" y="16.6" font-family="'Liberation Serif',serif" font-size="17.5" font-weight="bold" fill="#ffc400" textLength="11.6" lengthAdjust="spacingAndGlyphs" style="font-family:'Liberation Serif',serif">G</text><path d="M14.2 0.6V7M11 3.8H17.4" stroke="#ffc400" stroke-width="1.1"/></g></svg>
<div class="a" style="left:108px;top:132.6px;width:527px;text-align:center;font-size:11px;line-height:14px;white-space:nowrap;color:#141414;">EAGLE_array_monitor.mat</div>
<div class="a" style="left:635.3px;top:129.3px;width:17.4px;height:18px;border:1px solid #9a9793;border-radius:3.5px;background:linear-gradient(#ffffff,#f7f6f4 48%,#ebe8e4 52%,#eeebe7)"></div>
<div class="a" style="left:655.4px;top:129.3px;width:17.4px;height:18px;border:1px solid #9a9793;border-radius:3.5px;background:linear-gradient(#ffffff,#f7f6f4 48%,#ebe8e4 52%,#eeebe7)"></div>
<div class="a" style="left:675.6px;top:129.3px;width:17.4px;height:18px;border:1px solid #9a9793;border-radius:3.5px;background:linear-gradient(#ffffff,#f7f6f4 48%,#ebe8e4 52%,#eeebe7)"></div>
<svg style="left:635.3px;top:129.3px" width="60" height="18" viewBox="0 0 60 18"><path d="M4.9 11.9H12.7" stroke="#0a0a0a" stroke-width="2.1"/><rect x="25.3" y="6.3" width="6.6" height="5.9" fill="none" stroke="#0a0a0a" stroke-width="1.3"/><path d="M24.65 6.1H32.55" stroke="#0a0a0a" stroke-width="2"/><path d="M45.4 6L51.8 12.4M51.8 6L45.4 12.4" stroke="#0a0a0a" stroke-width="2.3"/></svg>
<div class="a" style="left:698.7px;top:125.5px;width:614.7px;height:520.3px;background:#efebe7;border-left:1.5px solid #5e5c5a;border-top:1px solid #9c9a97;border-right:1px solid #8a8886;border-bottom:1px solid #8a8886"></div>
<div class="a" style="left:700.2px;top:126.4px;width:612.2px;height:24px;background:linear-gradient(#ffffff 0,#fbfaf9 40%,#f3f1ee 49%,#e9e6e2 53%,#ece9e5 100%);border-bottom:1px solid #8d8b88;border-radius:3px 3px 0 0"></div>
<svg style="left:704.2px;top:129.2px" width="18" height="18" viewBox="0 0 18 18"><g transform="translate(0,0) scale(1)"><rect x="0" y="0" width="18" height="18" fill="#c00000"/><text x="1.2" y="16.6" font-family="'Liberation Serif',serif" font-size="17.5" font-weight="bold" fill="#ffc400" textLength="11.6" lengthAdjust="spacingAndGlyphs" style="font-family:'Liberation Serif',serif">G</text><path d="M14.2 0.6V7M11 3.8H17.4" stroke="#ffc400" stroke-width="1.1"/></g></svg>
<div class="a" style="left:722.2px;top:132.6px;width:527px;text-align:center;font-size:11px;line-height:14px;white-space:nowrap;color:#141414;">NEDA_array_monitor.mat</div>
<div class="a" style="left:1249.5px;top:129.3px;width:17.4px;height:18px;border:1px solid #9a9793;border-radius:3.5px;background:linear-gradient(#ffffff,#f7f6f4 48%,#ebe8e4 52%,#eeebe7)"></div>
<div class="a" style="left:1269.6px;top:129.3px;width:17.4px;height:18px;border:1px solid #9a9793;border-radius:3.5px;background:linear-gradient(#ffffff,#f7f6f4 48%,#ebe8e4 52%,#eeebe7)"></div>
<div class="a" style="left:1289.8px;top:129.3px;width:17.4px;height:18px;border:1px solid #9a9793;border-radius:3.5px;background:linear-gradient(#ffffff,#f7f6f4 48%,#ebe8e4 52%,#eeebe7)"></div>
<svg style="left:1249.5px;top:129.3px" width="60" height="18" viewBox="0 0 60 18"><path d="M4.9 11.9H12.7" stroke="#0a0a0a" stroke-width="2.1"/><rect x="25.3" y="6.3" width="6.6" height="5.9" fill="none" stroke="#0a0a0a" stroke-width="1.3"/><path d="M24.65 6.1H32.55" stroke="#0a0a0a" stroke-width="2"/><path d="M45.4 6L51.8 12.4M51.8 6L45.4 12.4" stroke="#0a0a0a" stroke-width="2.3"/></svg>
<div class="a" style="left:1312.9px;top:125.5px;width:614.7px;height:520.3px;background:#efebe7;border-left:1.5px solid #5e5c5a;border-top:1px solid #9c9a97;border-right:1px solid #8a8886;border-bottom:1px solid #8a8886"></div>
<div class="a" style="left:1314.4px;top:126.4px;width:612.2px;height:24px;background:linear-gradient(#ffffff 0,#fbfaf9 40%,#f3f1ee 49%,#e9e6e2 53%,#ece9e5 100%);border-bottom:1px solid #8d8b88;border-radius:3px 3px 0 0"></div>
<svg style="left:1318.4px;top:129.2px" width="18" height="18" viewBox="0 0 18 18"><g transform="translate(0,0) scale(1)"><rect x="0" y="0" width="18" height="18" fill="#c00000"/><text x="1.2" y="16.6" font-family="'Liberation Serif',serif" font-size="17.5" font-weight="bold" fill="#ffc400" textLength="11.6" lengthAdjust="spacingAndGlyphs" style="font-family:'Liberation Serif',serif">G</text><path d="M14.2 0.6V7M11 3.8H17.4" stroke="#ffc400" stroke-width="1.1"/></g></svg>
<div class="a" style="left:1336.4px;top:132.6px;width:527px;text-align:center;font-size:11px;line-height:14px;white-space:nowrap;color:#141414;">EAGLE_array_fan.spc</div>
<div class="a" style="left:1863.7px;top:129.3px;width:17.4px;height:18px;border:1px solid #9a9793;border-radius:3.5px;background:linear-gradient(#ffffff,#f7f6f4 48%,#ebe8e4 52%,#eeebe7)"></div>
<div class="a" style="left:1883.8px;top:129.3px;width:17.4px;height:18px;border:1px solid #9a9793;border-radius:3.5px;background:linear-gradient(#ffffff,#f7f6f4 48%,#ebe8e4 52%,#eeebe7)"></div>
<div class="a" style="left:1904px;top:129.3px;width:17.4px;height:18px;border:1px solid #9a9793;border-radius:3.5px;background:linear-gradient(#ffffff,#f7f6f4 48%,#ebe8e4 52%,#eeebe7)"></div>
<svg style="left:1863.7px;top:129.3px" width="60" height="18" viewBox="0 0 60 18"><path d="M4.9 11.9H12.7" stroke="#0a0a0a" stroke-width="2.1"/><rect x="25.3" y="6.3" width="6.6" height="5.9" fill="none" stroke="#0a0a0a" stroke-width="1.3"/><path d="M24.65 6.1H32.55" stroke="#0a0a0a" stroke-width="2"/><path d="M45.4 6L51.8 12.4M51.8 6L45.4 12.4" stroke="#0a0a0a" stroke-width="2.3"/></svg>
<div class="a" style="left:84.5px;top:645.2px;width:614.7px;height:520.3px;background:#efebe7;border-left:1.5px solid #5e5c5a;border-top:1px solid #9c9a97;border-right:1px solid #8a8886;border-bottom:1px solid #8a8886"></div>
<div class="a" style="left:86px;top:646.1px;width:612.2px;height:24px;background:linear-gradient(#ffffff 0,#fbfaf9 40%,#f3f1ee 49%,#e9e6e2 53%,#ece9e5 100%);border-bottom:1px solid #8d8b88;border-radius:3px 3px 0 0"></div>
<svg style="left:90px;top:648.9px" width="18" height="18" viewBox="0 0 18 18"><g transform="translate(0,0) scale(1)"><rect x="0" y="0" width="18" height="18" fill="#c00000"/><text x="1.2" y="16.6" font-family="'Liberation Serif',serif" font-size="17.5" font-weight="bold" fill="#ffc400" textLength="11.6" lengthAdjust="spacingAndGlyphs" style="font-family:'Liberation Serif',serif">G</text><path d="M14.2 0.6V7M11 3.8H17.4" stroke="#ffc400" stroke-width="1.1"/></g></svg>
<div class="a" style="left:108px;top:652.3px;width:527px;text-align:center;font-size:11px;line-height:14px;white-space:nowrap;color:#141414;">NEDA_array_fan.spc</div>
<div class="a" style="left:635.3px;top:649px;width:17.4px;height:18px;border:1px solid #9a9793;border-radius:3.5px;background:linear-gradient(#ffffff,#f7f6f4 48%,#ebe8e4 52%,#eeebe7)"></div>
<div class="a" style="left:655.4px;top:649px;width:17.4px;height:18px;border:1px solid #9a9793;border-radius:3.5px;background:linear-gradient(#ffffff,#f7f6f4 48%,#ebe8e4 52%,#eeebe7)"></div>
<div class="a" style="left:675.6px;top:649px;width:17.4px;height:18px;border:1px solid #9a9793;border-radius:3.5px;background:linear-gradient(#ffffff,#f7f6f4 48%,#ebe8e4 52%,#eeebe7)"></div>
<svg style="left:635.3px;top:649px" width="60" height="18" viewBox="0 0 60 18"><path d="M4.9 11.9H12.7" stroke="#0a0a0a" stroke-width="2.1"/><rect x="25.3" y="6.3" width="6.6" height="5.9" fill="none" stroke="#0a0a0a" stroke-width="1.3"/><path d="M24.65 6.1H32.55" stroke="#0a0a0a" stroke-width="2"/><path d="M45.4 6L51.8 12.4M51.8 6L45.4 12.4" stroke="#0a0a0a" stroke-width="2.3"/></svg>
<div class="a" style="left:698.7px;top:645.2px;width:614.7px;height:520.3px;background:#efebe7;border-left:1.5px solid #5e5c5a;border-top:1px solid #9c9a97;border-right:1px solid #8a8886;border-bottom:1px solid #8a8886"></div>
<div class="a" style="left:698.9px;top:645.9px;width:614.5px;height:23.8px;background:linear-gradient(#3fa0e2 0,#3a9adc 45%,#3189c9 52%,#3088c8 100%);border:1px solid #1d5c95;border-radius:4px 4px 0 0"></div>
<svg style="left:704.2px;top:648.9px" width="18" height="18" viewBox="0 0 18 18"><g transform="translate(0,0) scale(1)"><rect x="0" y="0" width="18" height="18" fill="#c00000"/><text x="1.2" y="16.6" font-family="'Liberation Serif',serif" font-size="17.5" font-weight="bold" fill="#ffc400" textLength="11.6" lengthAdjust="spacingAndGlyphs" style="font-family:'Liberation Serif',serif">G</text><path d="M14.2 0.6V7M11 3.8H17.4" stroke="#ffc400" stroke-width="1.1"/></g></svg>
<div class="a" style="left:722.2px;top:652.3px;width:527px;text-align:center;font-size:11px;line-height:14px;white-space:nowrap;color:#ffffff;text-shadow:0 1px 1px #1a4a78;">scaler_trigger.spc</div>
<div class="a" style="left:1249.5px;top:649px;width:17.4px;height:18px;border:1px solid #1b5588;border-radius:3.5px;background:linear-gradient(#4aa6e4,#3a96d6 48%,#2e84c4 52%,#2f86c6)"></div>
<div class="a" style="left:1269.6px;top:649px;width:17.4px;height:18px;border:1px solid #1b5588;border-radius:3.5px;background:linear-gradient(#4aa6e4,#3a96d6 48%,#2e84c4 52%,#2f86c6)"></div>
<div class="a" style="left:1289.8px;top:649px;width:17.4px;height:18px;border:1px solid #1b5588;border-radius:3.5px;background:linear-gradient(#4aa6e4,#3a96d6 48%,#2e84c4 52%,#2f86c6)"></div>
<svg style="left:1249.5px;top:649px" width="60" height="18" viewBox="0 0 60 18"><path d="M4.9 11.9H12.7" stroke="#fff" stroke-width="2.1"/><rect x="25.3" y="6.3" width="6.6" height="5.9" fill="none" stroke="#fff" stroke-width="1.3"/><path d="M24.65 6.1H32.55" stroke="#fff" stroke-width="2"/><path d="M45.4 6L51.8 12.4M51.8 6L45.4 12.4" stroke="#fff" stroke-width="2.3"/></svg>
<svg style="left:84px;top:125px" width="1846" height="1042" viewBox="84 125 1846 1042"><defs><linearGradient id="rb" x1="0" y1="1" x2="0" y2="0"><stop offset="0" stop-color="#0000ff"/><stop offset="0.25" stop-color="#00ffff"/><stop offset="0.5" stop-color="#00ff00"/><stop offset="0.75" stop-color="#ffff00"/><stop offset="1" stop-color="#ff0000"/></linearGradient></defs><style>.cd{font-family:"DejaVu Sans Condensed","DejaVu Sans",sans-serif;font-stretch:condensed}.ce{shape-rendering:crispEdges}</style><rect x="98" y="158.8" width="19.5" height="458.2" fill="#efebe7"/><path d="M98.5 617V159.3H117.5" fill="none" stroke="#7f7d7a" stroke-width="1"/><path d="M98 616.5H117V158.8" fill="none" stroke="#ffffff" stroke-width="1"/><rect x="117.6" y="159.6" width="548.4" height="456.6" fill="#000"/><text x="101.6" y="165.7" font-size="6.5" text-anchor="start" fill="#111" stroke="#111" stroke-width="0.15">1.9</text><rect x="112.4" y="166.1" width="3.6" height="1" fill="#111"/><rect x="114.4" y="173.7" width="1.6" height="1" fill="#111"/><rect x="114.4" y="181.3" width="1.6" height="1" fill="#111"/><rect x="114.4" y="188.9" width="1.6" height="1" fill="#111"/><text x="101.6" y="196.1" font-size="6.5" text-anchor="start" fill="#111" stroke="#111" stroke-width="0.15">1.5</text><rect x="112.4" y="196.5" width="3.6" height="1" fill="#111"/><rect x="114.4" y="204.1" width="1.6" height="1" fill="#111"/><rect x="114.4" y="211.7" width="1.6" height="1" fill="#111"/><rect x="114.4" y="219.3" width="1.6" height="1" fill="#111"/><text x="101.6" y="226.5" font-size="6.5" text-anchor="start" fill="#111" stroke="#111" stroke-width="0.15">1.1</text><rect x="112.4" y="226.9" width="3.6" height="1" fill="#111"/><rect x="114.4" y="234.5" width="1.6" height="1" fill="#111"/><rect x="114.4" y="242.1" width="1.6" height="1" fill="#111"/><rect x="114.4" y="249.7" width="1.6" height="1" fill="#111"/><text x="101.6" y="256.9" font-size="6.5" text-anchor="start" fill="#111" stroke="#111" stroke-width="0.15">0.7</text><rect x="112.4" y="257.3" width="3.6" height="1" fill="#111"/><rect x="114.4" y="264.9" width="1.6" height="1" fill="#111"/><rect x="114.4" y="272.5" width="1.6" height="1" fill="#111"/><rect x="114.4" y="280.1" width="1.6" height="1" fill="#111"/><text x="101.6" y="287.3" font-size="6.5" text-anchor="start" fill="#111" stroke="#111" stroke-width="0.15">0.3</text><rect x="112.4" y="287.7" width="3.6" height="1" fill="#111"/><rect x="114.4" y="295.3" width="1.6" height="1" fill="#111"/><rect x="114.4" y="302.9" width="1.6" height="1" fill="#111"/><rect x="114.4" y="310.5" width="1.6" height="1" fill="#111"/><text x="101" y="317.7" font-size="6.5" text-anchor="start" fill="#111" stroke="#111" stroke-width="0.15">-0.1</text><rect x="112.4" y="318.1" width="3.6" height="1" fill="#111"/><rect x="114.4" y="325.7" width="1.6" height="1" fill="#111"/><rect x="114.4" y="333.3" width="1.6" height="1" fill="#111"/><rect x="114.4" y="340.9" width="1.6" height="1" fill="#111"/><text x="101" y="348.1" font-size="6.5" text-anchor="start" fill="#111" stroke="#111" stroke-width="0.15">-0.5</text><rect x="112.4" y="348.5" width="3.6" height="1" fill="#111"/><rect x="114.4" y="356.1" width="1.6" height="1" fill="#111"/><rect x="114.4" y="363.7" width="1.6" height="1" fill="#111"/><rect x="114.4" y="371.3" width="1.6" height="1" fill="#111"/><text x="101" y="378.5" font-size="6.5" text-anchor="start" fill="#111" stroke="#111" stroke-width="0.15">-0.9</text><rect x="112.4" y="378.9" width="3.6" height="1" fill="#111"/><rect x="114.4" y="386.5" width="1.6" height="1" fill="#111"/><rect x="114.4" y="394.1" width="1.6" height="1" fill="#111"/><rect x="114.4" y="401.7" width="1.6" height="1" fill="#111"/><text x="101" y="408.9" font-size="6.5" text-anchor="start" fill="#111" stroke="#111" stroke-width="0.15">-1.3</text><rect x="112.4" y="409.3" width="3.6" height="1" fill="#111"/><rect x="114.4" y="416.9" width="1.6" height="1" fill="#111"/><rect x="114.4" y="424.5" width="1.6" height="1" fill="#111"/><rect x="114.4" y="432.1" width="1.6" height="1" fill="#111"/><text x="101" y="439.3" font-size="6.5" text-anchor="start" fill="#111" stroke="#111" stroke-width="0.15">-1.7</text><rect x="112.4" y="439.7" width="3.6" height="1" fill="#111"/><rect x="114.4" y="447.3" width="1.6" height="1" fill="#111"/><rect x="114.4" y="454.9" width="1.6" height="1" fill="#111"/><rect x="114.4" y="462.5" width="1.6" height="1" fill="#111"/><text x="101" y="469.7" font-size="6.5" text-anchor="start" fill="#111" stroke="#111" stroke-width="0.15">-2.1</text><rect x="112.4" y="470.1" width="3.6" height="1" fill="#111"/><rect x="114.4" y="477.7" width="1.6" height="1" fill="#111"/><rect x="114.4" y="485.3" width="1.6" height="1" fill="#111"/><rect x="114.4" y="492.9" width="1.6" height="1" fill="#111"/><text x="101" y="500.1" font-size="6.5" text-anchor="start" fill="#111" stroke="#111" stroke-width="0.15">-2.5</text><rect x="112.4" y="500.5" width="3.6" height="1" fill="#111"/><rect x="114.4" y="508.1" width="1.6" height="1" fill="#111"/><rect x="114.4" y="515.7" width="1.6" height="1" fill="#111"/><rect x="114.4" y="523.3" width="1.6" height="1" fill="#111"/><text x="101" y="530.5" font-size="6.5" text-anchor="start" fill="#111" stroke="#111" stroke-width="0.15">-2.9</text><rect x="112.4" y="530.9" width="3.6" height="1" fill="#111"/><rect x="114.4" y="538.5" width="1.6" height="1" fill="#111"/><rect x="114.4" y="546.1" width="1.6" height="1" fill="#111"/><rect x="114.4" y="553.7" width="1.6" height="1" fill="#111"/><text x="101" y="560.9" font-size="6.5" text-anchor="start" fill="#111" stroke="#111" stroke-width="0.15">-3.3</text><rect x="112.4" y="561.3" width="3.6" height="1" fill="#111"/><rect x="114.4" y="568.9" width="1.6" height="1" fill="#111"/><rect x="114.4" y="576.5" width="1.6" height="1" fill="#111"/><rect x="114.4" y="584.1" width="1.6" height="1" fill="#111"/><text x="101" y="591.3" font-size="6.5" text-anchor="start" fill="#111" stroke="#111" stroke-width="0.15">-3.7</text><rect x="112.4" y="591.7" width="3.6" height="1" fill="#111"/><rect x="114.4" y="599.3" width="1.6" height="1" fill="#111"/><rect x="114.4" y="606.9" width="1.6" height="1" fill="#111"/><rect x="114.4" y="614.5" width="1.6" height="1" fill="#111"/><rect x="175" y="233.2" width="15" height="76.8" fill="#00a0ff"/><rect x="175" y="462" width="15" height="77" fill="#50ff00"/><text x="175.4" y="332.2" font-size="6" fill="#00cccc" stroke="#00cccc" stroke-width="0.12">1</text><text x="175.4" y="560.2" font-size="6" fill="#00cccc" stroke="#00cccc" stroke-width="0.12">1</text><rect x="204" y="233.2" width="15" height="76.8" fill="#0044ff"/><rect x="204" y="462" width="15" height="77" fill="#7dff00"/><text x="204.4" y="332.2" font-size="6" fill="#00cccc" stroke="#00cccc" stroke-width="0.12">2</text><text x="204.4" y="560.2" font-size="6" fill="#00cccc" stroke="#00cccc" stroke-width="0.12">2</text><rect x="233" y="233.2" width="15" height="76.8" fill="#00faa0"/><rect x="233" y="462" width="15" height="77" fill="#0082ff"/><text x="233.4" y="332.2" font-size="6" fill="#00cccc" stroke="#00cccc" stroke-width="0.12">3</text><text x="233.4" y="560.2" font-size="6" fill="#00cccc" stroke="#00cccc" stroke-width="0.12">3</text><rect x="261" y="233.2" width="15" height="76.8" fill="#00a0ff"/><rect x="261" y="462" width="15" height="77" fill="#005aff"/><text x="261.4" y="332.2" font-size="6" fill="#00cccc" stroke="#00cccc" stroke-width="0.12">4</text><text x="261.4" y="560.2" font-size="6" fill="#00cccc" stroke="#00cccc" stroke-width="0.12">4</text><rect x="290" y="233.2" width="15" height="76.8" fill="#00faa5"/><rect x="290" y="462" width="15" height="77" fill="#00faeb"/><text x="290.4" y="332.2" font-size="6" fill="#00cccc" stroke="#00cccc" stroke-width="0.12">5</text><text x="290.4" y="560.2" font-size="6" fill="#00cccc" stroke="#00cccc" stroke-width="0.12">5</text><rect x="319" y="233.2" width="15" height="76.8" fill="#0046ff"/><rect x="319" y="462" width="15" height="77" fill="#00ffd7"/><text x="319.4" y="332.2" font-size="6" fill="#00cccc" stroke="#00cccc" stroke-width="0.12">6</text><text x="319.4" y="560.2" font-size="6" fill="#00cccc" stroke="#00cccc" stroke-width="0.12">6</text><rect x="348" y="233.2" width="15" height="76.8" fill="#008cff"/><rect x="348" y="462" width="15" height="77" fill="#0082ff"/><text x="348.4" y="332.2" font-size="6" fill="#00cccc" stroke="#00cccc" stroke-width="0.12">7</text><text x="348.4" y="560.2" font-size="6" fill="#00cccc" stroke="#00cccc" stroke-width="0.12">7</text><rect x="377" y="233.2" width="15" height="76.8" fill="#0514ff"/><rect x="377" y="462" width="15" height="77" fill="#7dff00"/><text x="377.4" y="332.2" font-size="6" fill="#00cccc" stroke="#00cccc" stroke-width="0.12">8</text><text x="377.4" y="560.2" font-size="6" fill="#00cccc" stroke="#00cccc" stroke-width="0.12">8</text><rect x="406" y="233.2" width="15" height="76.8" fill="#0096ff"/><rect x="406" y="462" width="15" height="77" fill="#00faa0"/><text x="406.4" y="332.2" font-size="6" fill="#00cccc" stroke="#00cccc" stroke-width="0.12">9</text><text x="406.4" y="560.2" font-size="6" fill="#00cccc" stroke="#00cccc" stroke-width="0.12">9</text><rect x="435" y="233.2" width="15" height="76.8" fill="#00faa0"/><rect x="435" y="462" width="15" height="77" fill="#7dff00"/><text x="435.4" y="332.2" font-size="6" fill="#00cccc" stroke="#00cccc" stroke-width="0.12">10</text><text x="435.4" y="560.2" font-size="6" fill="#00cccc" stroke="#00cccc" stroke-width="0.12">10</text><rect x="464" y="233.2" width="15" height="76.8" fill="#00faa5"/><rect x="464" y="462" width="15" height="77" fill="#009bff"/><text x="464.4" y="332.2" font-size="6" fill="#00cccc" stroke="#00cccc" stroke-width="0.12">11</text><text x="464.4" y="560.2" font-size="6" fill="#00cccc" stroke="#00cccc" stroke-width="0.12">11</text><rect x="493" y="233.2" width="15" height="76.8" fill="#00ffd7"/><rect x="493" y="462" width="15" height="77" fill="#00fae1"/><text x="493.4" y="332.2" font-size="6" fill="#00cccc" stroke="#00cccc" stroke-width="0.12">12</text><text x="493.4" y="560.2" font-size="6" fill="#00cccc" stroke="#00cccc" stroke-width="0.12">12</text><rect x="522" y="233.2" width="15" height="76.8" fill="#0046ff"/><rect x="522" y="462" width="15" height="77" fill="#0082ff"/><text x="522.4" y="332.2" font-size="6" fill="#00cccc" stroke="#00cccc" stroke-width="0.12">13</text><text x="522.4" y="560.2" font-size="6" fill="#00cccc" stroke="#00cccc" stroke-width="0.12">13</text><rect x="550" y="233.2" width="15" height="76.8" fill="#0046ff"/><rect x="550" y="462" width="15" height="77" fill="#00fadc"/><text x="550.4" y="332.2" font-size="6" fill="#00cccc" stroke="#00cccc" stroke-width="0.12">14</text><text x="550.4" y="560.2" font-size="6" fill="#00cccc" stroke="#00cccc" stroke-width="0.12">14</text><rect x="579" y="233.2" width="15" height="76.8" fill="#00a5ff"/><rect x="579" y="462" width="15" height="77" fill="#6eff00"/><text x="579.4" y="332.2" font-size="6" fill="#00cccc" stroke="#00cccc" stroke-width="0.12">15</text><text x="579.4" y="560.2" font-size="6" fill="#00cccc" stroke="#00cccc" stroke-width="0.12">15</text><text x="145.8" y="277.6" font-size="6" fill="#00cccc" stroke="#00cccc" stroke-width="0.12">Ge</text><text x="146" y="393" font-size="6" fill="#00cccc" stroke="#00cccc" stroke-width="0.12">This graph is reset every 1 min</text><text x="146" y="507.2" font-size="6" fill="#00cccc" stroke="#00cccc" stroke-width="0.12">ACS</text><rect x="98.6" y="616.2" width="568.4" height="1.3" fill="#fff"/><rect x="117.1" y="617.6" width="549.9" height="15.5" fill="#efebe7"/><path d="M117.6 633.1V618.1H667" fill="none" stroke="#7f7d7a" stroke-width="1"/><path d="M117.1 632.6H666.5V617.6" fill="none" stroke="#ffffff" stroke-width="1"/><rect x="117.1" y="618.2" width="1" height="13.3" fill="#1a1a1a"/><rect x="117.45" y="618.2" width="1" height="6.6" fill="#111"/><rect x="131.875" y="618.2" width="1" height="6.6" fill="#111"/><rect x="145.95" y="618.2" width="1.7" height="5.6" fill="#111"/><rect x="160.725" y="618.2" width="1" height="6.6" fill="#111"/><rect x="175.15" y="618.2" width="1" height="6.6" fill="#111"/><rect x="189.225" y="618.2" width="1.7" height="5.6" fill="#111"/><rect x="204" y="618.2" width="1" height="6.6" fill="#111"/><rect x="218.425" y="618.2" width="1" height="6.6" fill="#111"/><rect x="232.5" y="618.2" width="1.7" height="5.6" fill="#111"/><rect x="247.275" y="618.2" width="1" height="6.6" fill="#111"/><rect x="261.7" y="618.2" width="1" height="6.6" fill="#111"/><rect x="275.775" y="618.2" width="1.7" height="5.6" fill="#111"/><rect x="290.55" y="618.2" width="1" height="6.6" fill="#111"/><rect x="304.975" y="618.2" width="1" height="6.6" fill="#111"/><rect x="319.05" y="618.2" width="1.7" height="5.6" fill="#111"/><rect x="333.825" y="618.2" width="1" height="6.6" fill="#111"/><rect x="348.25" y="618.2" width="1" height="6.6" fill="#111"/><rect x="362.325" y="618.2" width="1.7" height="5.6" fill="#111"/><rect x="377.1" y="618.2" width="1" height="6.6" fill="#111"/><rect x="391.525" y="618.2" width="1" height="6.6" fill="#111"/><rect x="405.6" y="618.2" width="1.7" height="5.6" fill="#111"/><rect x="420.375" y="618.2" width="1" height="6.6" fill="#111"/><rect x="434.8" y="618.2" width="1" height="6.6" fill="#111"/><rect x="448.875" y="618.2" width="1.7" height="5.6" fill="#111"/><rect x="463.65" y="618.2" width="1" height="6.6" fill="#111"/><rect x="478.075" y="618.2" width="1" height="6.6" fill="#111"/><rect x="492.15" y="618.2" width="1.7" height="5.6" fill="#111"/><rect x="506.925" y="618.2" width="1" height="6.6" fill="#111"/><rect x="521.35" y="618.2" width="1" height="6.6" fill="#111"/><rect x="535.425" y="618.2" width="1.7" height="5.6" fill="#111"/><rect x="550.2" y="618.2" width="1" height="6.6" fill="#111"/><rect x="564.625" y="618.2" width="1" height="6.6" fill="#111"/><rect x="578.7" y="618.2" width="1.7" height="5.6" fill="#111"/><rect x="593.475" y="618.2" width="1" height="6.6" fill="#111"/><rect x="607.9" y="618.2" width="1" height="6.6" fill="#111"/><rect x="621.975" y="618.2" width="1.7" height="5.6" fill="#111"/><rect x="636.75" y="618.2" width="1" height="6.6" fill="#111"/><rect x="651.175" y="618.2" width="1" height="6.6" fill="#111"/><rect x="665.25" y="618.2" width="1.7" height="5.6" fill="#111"/><text x="145.2" y="630.3" font-size="9.4" text-anchor="middle" fill="#161616" stroke="#161616" stroke-width="0.18" letter-spacing="0.22" class="cd">-1</text><text x="188.475" y="630.3" font-size="9.4" text-anchor="middle" fill="#161616" stroke="#161616" stroke-width="0.18" letter-spacing="0.22" class="cd">0.5</text><text x="231.75" y="630.3" font-size="9.4" text-anchor="middle" fill="#161616" stroke="#161616" stroke-width="0.18" letter-spacing="0.22" class="cd">2</text><text x="275.025" y="630.3" font-size="9.4" text-anchor="middle" fill="#161616" stroke="#161616" stroke-width="0.18" letter-spacing="0.22" class="cd">3.5</text><text x="318.3" y="630.3" font-size="9.4" text-anchor="middle" fill="#161616" stroke="#161616" stroke-width="0.18" letter-spacing="0.22" class="cd">5</text><text x="361.575" y="630.3" font-size="9.4" text-anchor="middle" fill="#161616" stroke="#161616" stroke-width="0.18" letter-spacing="0.22" class="cd">6.5</text><text x="404.85" y="630.3" font-size="9.4" text-anchor="middle" fill="#161616" stroke="#161616" stroke-width="0.18" letter-spacing="0.22" class="cd">8</text><text x="448.125" y="630.3" font-size="9.4" text-anchor="middle" fill="#161616" stroke="#161616" stroke-width="0.18" letter-spacing="0.22" class="cd">9.5</text><text x="491.4" y="630.3" font-size="9.4" text-anchor="middle" fill="#161616" stroke="#161616" stroke-width="0.18" letter-spacing="0.22" class="cd">11</text><text x="534.675" y="630.3" font-size="9.4" text-anchor="middle" fill="#161616" stroke="#161616" stroke-width="0.18" letter-spacing="0.22" class="cd">12.5</text><text x="577.95" y="630.3" font-size="9.4" text-anchor="middle" fill="#161616" stroke="#161616" stroke-width="0.18" letter-spacing="0.22" class="cd">14</text><text x="621.225" y="630.3" font-size="9.4" text-anchor="middle" fill="#161616" stroke="#161616" stroke-width="0.18" letter-spacing="0.22" class="cd">15.5</text><rect x="669.6" y="159.6" width="16.4" height="456.6" fill="url(#rb)"/><path d="M668.8 159.6V616.2" stroke="#8a8885" stroke-width="1"/><rect x="682" y="616.1" width="3" height="1" fill="#222"/><rect x="682" y="597.48" width="3" height="1" fill="#222"/><rect x="682" y="578.86" width="3" height="1" fill="#222"/><rect x="682" y="560.24" width="3" height="1" fill="#222"/><rect x="682" y="541.62" width="3" height="1" fill="#222"/><rect x="682" y="523" width="3" height="1" fill="#222"/><rect x="682" y="504.38" width="3" height="1" fill="#222"/><rect x="682" y="485.76" width="3" height="1" fill="#222"/><rect x="682" y="467.14" width="3" height="1" fill="#222"/><rect x="682" y="448.52" width="3" height="1" fill="#222"/><rect x="682" y="429.9" width="3" height="1" fill="#222"/><rect x="682" y="411.28" width="3" height="1" fill="#222"/><rect x="682" y="392.66" width="3" height="1" fill="#222"/><rect x="682" y="374.04" width="3" height="1" fill="#222"/><rect x="682" y="355.42" width="3" height="1" fill="#222"/><rect x="682" y="336.8" width="3" height="1" fill="#222"/><rect x="682" y="318.18" width="3" height="1" fill="#222"/><rect x="682" y="299.56" width="3" height="1" fill="#222"/><rect x="682" y="280.94" width="3" height="1" fill="#222"/><rect x="682" y="262.32" width="3" height="1" fill="#222"/><rect x="682" y="243.7" width="3" height="1" fill="#222"/><rect x="682" y="225.08" width="3" height="1" fill="#222"/><rect x="682" y="206.46" width="3" height="1" fill="#222"/><rect x="682" y="187.84" width="3" height="1" fill="#222"/><rect x="682" y="169.22" width="3" height="1" fill="#222"/><text x="678.4" y="616.4" font-size="6.5" text-anchor="end" fill="#2a2a2a">0</text><rect x="681.2" y="616.1" width="4" height="1" fill="#222"/><text x="681.2" y="523.3" font-size="6.5" text-anchor="end" fill="#2a2a2a">0.5</text><rect x="681.2" y="523" width="4" height="1" fill="#222"/><text x="678.4" y="430.2" font-size="6.5" text-anchor="end" fill="#2a2a2a">1</text><rect x="681.2" y="429.9" width="4" height="1" fill="#222"/><text x="681.2" y="337.1" font-size="6.5" text-anchor="end" fill="#2a2a2a">1.5</text><rect x="681.2" y="336.8" width="4" height="1" fill="#222"/><text x="669.2" y="181.9" font-size="6.6" fill="#3a20e0">*10</text><text x="681.2" y="179" font-size="6.4" fill="#3a20e0">4</text><rect x="712.2" y="158.8" width="19.5" height="458.2" fill="#efebe7"/><path d="M712.7 617V159.3H731.7" fill="none" stroke="#7f7d7a" stroke-width="1"/><path d="M712.2 616.5H731.2V158.8" fill="none" stroke="#ffffff" stroke-width="1"/><rect x="731.8" y="159.6" width="548.4" height="456.6" fill="#000"/><rect x="726.8" y="159.3" width="3.4" height="1" fill="#111"/><rect x="726.8" y="190.8" width="3.4" height="1" fill="#111"/><text x="715" y="190.7" font-size="6.5" text-anchor="start" fill="#111" stroke="#111" stroke-width="0.15">1</text><rect x="726.8" y="222.7" width="3.4" height="1" fill="#111"/><text x="715" y="222.6" font-size="6.5" text-anchor="start" fill="#111" stroke="#111" stroke-width="0.15">0</text><rect x="726.8" y="255.9" width="3.4" height="1" fill="#111"/><text x="715" y="255.8" font-size="6.5" text-anchor="start" fill="#111" stroke="#111" stroke-width="0.15">-1</text><rect x="726.8" y="288.7" width="3.4" height="1" fill="#111"/><text x="715" y="288.6" font-size="6.5" text-anchor="start" fill="#111" stroke="#111" stroke-width="0.15">-2</text><rect x="726.8" y="320.8" width="3.4" height="1" fill="#111"/><text x="715" y="320.7" font-size="6.5" text-anchor="start" fill="#111" stroke="#111" stroke-width="0.15">-3</text><rect x="726.8" y="353.8" width="3.4" height="1" fill="#111"/><text x="715" y="353.7" font-size="6.5" text-anchor="start" fill="#111" stroke="#111" stroke-width="0.15">-4</text><rect x="726.8" y="385.7" width="3.4" height="1" fill="#111"/><text x="715" y="385.6" font-size="6.5" text-anchor="start" fill="#111" stroke="#111" stroke-width="0.15">-5</text><rect x="726.8" y="418.9" width="3.4" height="1" fill="#111"/><text x="715" y="418.8" font-size="6.5" text-anchor="start" fill="#111" stroke="#111" stroke-width="0.15">-6</text><rect x="726.8" y="451.5" width="3.4" height="1" fill="#111"/><text x="715" y="451.4" font-size="6.5" text-anchor="start" fill="#111" stroke="#111" stroke-width="0.15">-7</text><rect x="726.8" y="483.8" width="3.4" height="1" fill="#111"/><text x="715" y="483.7" font-size="6.5" text-anchor="start" fill="#111" stroke="#111" stroke-width="0.15">-8</text><rect x="726.8" y="516.6" width="3.4" height="1" fill="#111"/><text x="715" y="516.5" font-size="6.5" text-anchor="start" fill="#111" stroke="#111" stroke-width="0.15">-9</text><rect x="726.8" y="549.5" width="3.4" height="1" fill="#111"/><text x="715" y="549.4" font-size="6.5" text-anchor="start" fill="#111" stroke="#111" stroke-width="0.15">-10</text><rect x="726.8" y="582.2" width="3.4" height="1" fill="#111"/><text x="715" y="582.1" font-size="6.5" text-anchor="start" fill="#111" stroke="#111" stroke-width="0.15">-11</text><rect x="726.8" y="614.8" width="3.4" height="1" fill="#111"/><rect x="809" y="189" width="21" height="34" fill="#00ffa0"/><text x="809.3" y="235.6" font-size="6" fill="#00cccc" stroke="#00cccc" stroke-width="0.12">0</text><rect x="849" y="189" width="21" height="34" fill="#00ffe6"/><text x="849.3" y="235.6" font-size="6" fill="#00cccc" stroke="#00cccc" stroke-width="0.12">1</text><rect x="888" y="189" width="21" height="34" fill="#00ffff"/><text x="888.3" y="235.6" font-size="6" fill="#00cccc" stroke="#00cccc" stroke-width="0.12">2</text><rect x="927" y="189" width="21" height="34" fill="#00ffeb"/><text x="927.3" y="235.6" font-size="6" fill="#00cccc" stroke="#00cccc" stroke-width="0.12">3</text><rect x="966" y="189" width="21" height="34" fill="#00ffd7"/><text x="966.3" y="235.6" font-size="6" fill="#00cccc" stroke="#00cccc" stroke-width="0.12">4</text><rect x="1006" y="189" width="21" height="34" fill="#00ffff"/><text x="1006.3" y="235.6" font-size="6" fill="#00cccc" stroke="#00cccc" stroke-width="0.12">5</text><rect x="1045" y="189" width="21" height="34" fill="#00ffe1"/><text x="1045.3" y="235.6" font-size="6" fill="#00cccc" stroke="#00cccc" stroke-width="0.12">6</text><rect x="1084" y="189" width="21" height="34" fill="#00ffc3"/><text x="1084.3" y="235.6" font-size="6" fill="#00cccc" stroke="#00cccc" stroke-width="0.12">7</text><rect x="1123" y="189" width="21" height="34" fill="#00ff8c"/><text x="1123.3" y="235.6" font-size="6" fill="#00cccc" stroke="#00cccc" stroke-width="0.12">8</text><rect x="1162" y="189" width="21" height="34" fill="#00ff8c"/><text x="1162.3" y="235.6" font-size="6" fill="#00cccc" stroke="#00cccc" stroke-width="0.12">9</text><rect x="809" y="255" width="21" height="34" fill="#00f53c"/><text x="809.3" y="301.6" font-size="6" fill="#00cccc" stroke="#00cccc" stroke-width="0.12">10</text><rect x="849" y="255" width="21" height="34" fill="#00f05a"/><text x="849.3" y="301.6" font-size="6" fill="#00cccc" stroke="#00cccc" stroke-width="0.12">11</text><rect x="888" y="255" width="21" height="34" fill="#00f546"/><text x="888.3" y="301.6" font-size="6" fill="#00cccc" stroke="#00cccc" stroke-width="0.12">12</text><rect x="927" y="255" width="21" height="34" fill="#00ffa0"/><text x="927.3" y="301.6" font-size="6" fill="#00cccc" stroke="#00cccc" stroke-width="0.12">13</text><rect x="966" y="255" width="21" height="34" fill="#00f53c"/><text x="966.3" y="301.6" font-size="6" fill="#00cccc" stroke="#00cccc" stroke-width="0.12">14</text><rect x="1006" y="255" width="21" height="34" fill="#00f53c"/><text x="1006.3" y="301.6" font-size="6" fill="#00cccc" stroke="#00cccc" stroke-width="0.12">15</text><rect x="1045" y="255" width="21" height="34" fill="#00f546"/><text x="1045.3" y="301.6" font-size="6" fill="#00cccc" stroke="#00cccc" stroke-width="0.12">16</text><rect x="1084" y="255" width="21" height="34" fill="#00f546"/><text x="1084.3" y="301.6" font-size="6" fill="#00cccc" stroke="#00cccc" stroke-width="0.12">17</text><rect x="1123" y="255" width="21" height="34" fill="#00f05a"/><text x="1123.3" y="301.6" font-size="6" fill="#00cccc" stroke="#00cccc" stroke-width="0.12">18</text><rect x="1162" y="255" width="21" height="34" fill="#00f00a"/><text x="1162.3" y="301.6" font-size="6" fill="#00cccc" stroke="#00cccc" stroke-width="0.12">19</text><rect x="809" y="320" width="21" height="34" fill="#00f53c"/><text x="809.3" y="366.6" font-size="6" fill="#00cccc" stroke="#00cccc" stroke-width="0.12">20</text><rect x="849" y="320" width="21" height="34" fill="#00f532"/><text x="849.3" y="366.6" font-size="6" fill="#00cccc" stroke="#00cccc" stroke-width="0.12">21</text><rect x="888" y="320" width="21" height="34" fill="#00e1ff"/><text x="888.3" y="366.6" font-size="6" fill="#00cccc" stroke="#00cccc" stroke-width="0.12">22</text><rect x="927" y="320" width="21" height="34" fill="#00ffff"/><text x="927.3" y="366.6" font-size="6" fill="#00cccc" stroke="#00cccc" stroke-width="0.12">23</text><rect x="966" y="320" width="21" height="34" fill="#00a5ff"/><text x="966.3" y="366.6" font-size="6" fill="#00cccc" stroke="#00cccc" stroke-width="0.12">24</text><rect x="1006" y="320" width="21" height="34" fill="#00c8ff"/><text x="1006.3" y="366.6" font-size="6" fill="#00cccc" stroke="#00cccc" stroke-width="0.12">25</text><rect x="1045" y="320" width="21" height="34" fill="#00c8ff"/><text x="1045.3" y="366.6" font-size="6" fill="#00cccc" stroke="#00cccc" stroke-width="0.12">26</text><rect x="1084" y="320" width="21" height="34" fill="#008cff"/><text x="1084.3" y="366.6" font-size="6" fill="#00cccc" stroke="#00cccc" stroke-width="0.12">27</text><rect x="1123" y="320" width="21" height="34" fill="#00f5ff"/><text x="1123.3" y="366.6" font-size="6" fill="#00cccc" stroke="#00cccc" stroke-width="0.12">28</text><rect x="1162" y="320" width="21" height="34" fill="#00b4ff"/><text x="1162.3" y="366.6" font-size="6" fill="#00cccc" stroke="#00cccc" stroke-width="0.12">29</text><rect x="809" y="385" width="21" height="34" fill="#00d2ff"/><text x="809.3" y="431.6" font-size="6" fill="#00cccc" stroke="#00cccc" stroke-width="0.12">30</text><rect x="849" y="385" width="21" height="34" fill="#00f5ff"/><text x="849.3" y="431.6" font-size="6" fill="#00cccc" stroke="#00cccc" stroke-width="0.12">31</text><rect x="888" y="385" width="21" height="34" fill="#00f5ff"/><text x="888.3" y="431.6" font-size="6" fill="#00cccc" stroke="#00cccc" stroke-width="0.12">32</text><rect x="927" y="385" width="21" height="34" fill="#00a5ff"/><text x="927.3" y="431.6" font-size="6" fill="#00cccc" stroke="#00cccc" stroke-width="0.12">33</text><rect x="966" y="385" width="21" height="34" fill="#00faf5"/><text x="966.3" y="431.6" font-size="6" fill="#00cccc" stroke="#00cccc" stroke-width="0.12">34</text><rect x="1006" y="385" width="21" height="34" fill="#00faff"/><text x="1006.3" y="431.6" font-size="6" fill="#00cccc" stroke="#00cccc" stroke-width="0.12">35</text><rect x="1045" y="385" width="21" height="34" fill="#0096ff"/><text x="1045.3" y="431.6" font-size="6" fill="#00cccc" stroke="#00cccc" stroke-width="0.12">36</text><rect x="1084" y="385" width="21" height="34" fill="#00ffd7"/><text x="1084.3" y="431.6" font-size="6" fill="#00cccc" stroke="#00cccc" stroke-width="0.12">37</text><rect x="1123" y="385" width="21" height="34" fill="#00dcff"/><text x="1123.3" y="431.6" font-size="6" fill="#00cccc" stroke="#00cccc" stroke-width="0.12">38</text><rect x="1162" y="385" width="21" height="34" fill="#00ebff"/><text x="1162.3" y="431.6" font-size="6" fill="#00cccc" stroke="#00cccc" stroke-width="0.12">39</text><rect x="809" y="450" width="21" height="34" fill="#00ffe1"/><text x="809.3" y="496.6" font-size="6" fill="#00cccc" stroke="#00cccc" stroke-width="0.12">40</text><rect x="849" y="450" width="21" height="34" fill="#00cdff"/><text x="849.3" y="496.6" font-size="6" fill="#00cccc" stroke="#00cccc" stroke-width="0.12">41</text><rect x="888" y="450" width="21" height="34" fill="#00d7ff"/><text x="888.3" y="496.6" font-size="6" fill="#00cccc" stroke="#00cccc" stroke-width="0.12">42</text><rect x="927" y="450" width="21" height="34" fill="#00fad2"/><text x="927.3" y="496.6" font-size="6" fill="#00cccc" stroke="#00cccc" stroke-width="0.12">43</text><rect x="966" y="450" width="21" height="34" fill="#00c8ff"/><text x="966.3" y="496.6" font-size="6" fill="#00cccc" stroke="#00cccc" stroke-width="0.12">44</text><rect x="1006" y="450" width="21" height="34" fill="#00d7ff"/><text x="1006.3" y="496.6" font-size="6" fill="#00cccc" stroke="#00cccc" stroke-width="0.12">45</text><rect x="1045" y="450" width="21" height="34" fill="#00faf5"/><text x="1045.3" y="496.6" font-size="6" fill="#00cccc" stroke="#00cccc" stroke-width="0.12">46</text><rect x="1084" y="450" width="21" height="34" fill="#00e1ff"/><text x="1084.3" y="496.6" font-size="6" fill="#00cccc" stroke="#00cccc" stroke-width="0.12">47</text><rect x="1123" y="450" width="21" height="34" fill="#00f5ff"/><text x="1123.3" y="496.6" font-size="6" fill="#00cccc" stroke="#00cccc" stroke-width="0.12">48</text><rect x="1162" y="450" width="21" height="34" fill="#00fff0"/><text x="1162.3" y="496.6" font-size="6" fill="#00cccc" stroke="#00cccc" stroke-width="0.12">49</text><rect x="809" y="516" width="21" height="34" fill="#00f0ff"/><text x="809.3" y="562.6" font-size="6" fill="#00cccc" stroke="#00cccc" stroke-width="0.12">50</text><rect x="849" y="516" width="21" height="34" fill="#00f0ff"/><text x="849.3" y="562.6" font-size="6" fill="#00cccc" stroke="#00cccc" stroke-width="0.12">51</text><text x="770" y="187.2" font-size="6" fill="#00cccc" stroke="#00cccc" stroke-width="0.12">This graph is reset every 1 min</text><text x="770" y="212.8" font-size="6" fill="#00cccc" stroke="#00cccc" stroke-width="0.12">NEDA</text><rect x="712.8" y="616.2" width="568.4" height="1.3" fill="#fff"/><rect x="731.3" y="617.6" width="549.9" height="15.5" fill="#efebe7"/><path d="M731.8 633.1V618.1H1281.2" fill="none" stroke="#7f7d7a" stroke-width="1"/><path d="M731.3 632.6H1280.7V617.6" fill="none" stroke="#ffffff" stroke-width="1"/><rect x="731.3" y="618.2" width="1" height="13.3" fill="#1a1a1a"/><rect x="730.25" y="618.2" width="1.7" height="5.6" fill="#111"/><rect x="750.225" y="618.2" width="1" height="6.6" fill="#111"/><rect x="769.5" y="618.2" width="1.7" height="5.6" fill="#111"/><rect x="789.475" y="618.2" width="1" height="6.6" fill="#111"/><rect x="808.75" y="618.2" width="1.7" height="5.6" fill="#111"/><rect x="828.725" y="618.2" width="1" height="6.6" fill="#111"/><rect x="848" y="618.2" width="1.7" height="5.6" fill="#111"/><rect x="867.975" y="618.2" width="1" height="6.6" fill="#111"/><rect x="887.25" y="618.2" width="1.7" height="5.6" fill="#111"/><rect x="907.225" y="618.2" width="1" height="6.6" fill="#111"/><rect x="926.5" y="618.2" width="1.7" height="5.6" fill="#111"/><rect x="946.475" y="618.2" width="1" height="6.6" fill="#111"/><rect x="965.75" y="618.2" width="1.7" height="5.6" fill="#111"/><rect x="985.725" y="618.2" width="1" height="6.6" fill="#111"/><rect x="1005" y="618.2" width="1.7" height="5.6" fill="#111"/><rect x="1024.97" y="618.2" width="1" height="6.6" fill="#111"/><rect x="1044.25" y="618.2" width="1.7" height="5.6" fill="#111"/><rect x="1064.22" y="618.2" width="1" height="6.6" fill="#111"/><rect x="1083.5" y="618.2" width="1.7" height="5.6" fill="#111"/><rect x="1103.47" y="618.2" width="1" height="6.6" fill="#111"/><rect x="1122.75" y="618.2" width="1.7" height="5.6" fill="#111"/><rect x="1142.72" y="618.2" width="1" height="6.6" fill="#111"/><rect x="1162" y="618.2" width="1.7" height="5.6" fill="#111"/><rect x="1181.97" y="618.2" width="1" height="6.6" fill="#111"/><rect x="1201.25" y="618.2" width="1.7" height="5.6" fill="#111"/><rect x="1221.22" y="618.2" width="1" height="6.6" fill="#111"/><rect x="1240.5" y="618.2" width="1.7" height="5.6" fill="#111"/><rect x="1260.47" y="618.2" width="1" height="6.6" fill="#111"/><rect x="1279.75" y="618.2" width="1.7" height="5.6" fill="#111"/><text x="768.95" y="630.3" font-size="9.4" text-anchor="middle" fill="#161616" stroke="#161616" stroke-width="0.18" letter-spacing="0.22" class="cd">-1</text><text x="808.2" y="630.3" font-size="9.4" text-anchor="middle" fill="#161616" stroke="#161616" stroke-width="0.18" letter-spacing="0.22" class="cd">0</text><text x="847.45" y="630.3" font-size="9.4" text-anchor="middle" fill="#161616" stroke="#161616" stroke-width="0.18" letter-spacing="0.22" class="cd">1</text><text x="886.7" y="630.3" font-size="9.4" text-anchor="middle" fill="#161616" stroke="#161616" stroke-width="0.18" letter-spacing="0.22" class="cd">2</text><text x="925.95" y="630.3" font-size="9.4" text-anchor="middle" fill="#161616" stroke="#161616" stroke-width="0.18" letter-spacing="0.22" class="cd">3</text><text x="965.2" y="630.3" font-size="9.4" text-anchor="middle" fill="#161616" stroke="#161616" stroke-width="0.18" letter-spacing="0.22" class="cd">4</text><text x="1004.45" y="630.3" font-size="9.4" text-anchor="middle" fill="#161616" stroke="#161616" stroke-width="0.18" letter-spacing="0.22" class="cd">5</text><text x="1043.7" y="630.3" font-size="9.4" text-anchor="middle" fill="#161616" stroke="#161616" stroke-width="0.18" letter-spacing="0.22" class="cd">6</text><text x="1082.95" y="630.3" font-size="9.4" text-anchor="middle" fill="#161616" stroke="#161616" stroke-width="0.18" letter-spacing="0.22" class="cd">7</text><text x="1122.2" y="630.3" font-size="9.4" text-anchor="middle" fill="#161616" stroke="#161616" stroke-width="0.18" letter-spacing="0.22" class="cd">8</text><text x="1161.45" y="630.3" font-size="9.4" text-anchor="middle" fill="#161616" stroke="#161616" stroke-width="0.18" letter-spacing="0.22" class="cd">9</text><text x="1200.7" y="630.3" font-size="9.4" text-anchor="middle" fill="#161616" stroke="#161616" stroke-width="0.18" letter-spacing="0.22" class="cd">10</text><text x="1239.95" y="630.3" font-size="9.4" text-anchor="middle" fill="#161616" stroke="#161616" stroke-width="0.18" letter-spacing="0.22" class="cd">11</text><rect x="1283.8" y="159.6" width="16.4" height="456.6" fill="url(#rb)"/><path d="M1283 159.6V616.2" stroke="#8a8885" stroke-width="1"/><rect x="1296.2" y="616.1" width="3" height="1" fill="#222"/><rect x="1296.2" y="594.2" width="3" height="1" fill="#222"/><rect x="1296.2" y="572.3" width="3" height="1" fill="#222"/><rect x="1296.2" y="550.4" width="3" height="1" fill="#222"/><rect x="1296.2" y="528.5" width="3" height="1" fill="#222"/><rect x="1296.2" y="506.6" width="3" height="1" fill="#222"/><rect x="1296.2" y="484.7" width="3" height="1" fill="#222"/><rect x="1296.2" y="462.8" width="3" height="1" fill="#222"/><rect x="1296.2" y="440.9" width="3" height="1" fill="#222"/><rect x="1296.2" y="419" width="3" height="1" fill="#222"/><rect x="1296.2" y="397.1" width="3" height="1" fill="#222"/><rect x="1296.2" y="375.2" width="3" height="1" fill="#222"/><rect x="1296.2" y="353.3" width="3" height="1" fill="#222"/><rect x="1296.2" y="331.4" width="3" height="1" fill="#222"/><rect x="1296.2" y="309.5" width="3" height="1" fill="#222"/><rect x="1296.2" y="287.6" width="3" height="1" fill="#222"/><rect x="1296.2" y="265.7" width="3" height="1" fill="#222"/><rect x="1296.2" y="243.8" width="3" height="1" fill="#222"/><rect x="1296.2" y="221.9" width="3" height="1" fill="#222"/><rect x="1296.2" y="200" width="3" height="1" fill="#222"/><rect x="1296.2" y="178.1" width="3" height="1" fill="#222"/><text x="1292.6" y="616.4" font-size="6.5" text-anchor="end" fill="#2a2a2a">0</text><rect x="1295.4" y="616.1" width="4" height="1" fill="#222"/><text x="1295.4" y="506.9" font-size="6.5" text-anchor="end" fill="#2a2a2a">0.5</text><rect x="1295.4" y="506.6" width="4" height="1" fill="#222"/><text x="1292.6" y="397.4" font-size="6.5" text-anchor="end" fill="#2a2a2a">1</text><rect x="1295.4" y="397.1" width="4" height="1" fill="#222"/><text x="1295.4" y="287.9" font-size="6.5" text-anchor="end" fill="#2a2a2a">1.5</text><rect x="1295.4" y="287.6" width="4" height="1" fill="#222"/><text x="1283.4" y="181.9" font-size="6.6" fill="#3a20e0">*10</text><text x="1295.4" y="179" font-size="6.4" fill="#3a20e0">3</text><rect x="1326.4" y="158.8" width="19.5" height="458.2" fill="#efebe7"/><path d="M1326.9 617V159.3H1345.9" fill="none" stroke="#7f7d7a" stroke-width="1"/><path d="M1326.4 616.5H1345.4V158.8" fill="none" stroke="#ffffff" stroke-width="1"/><rect x="1345.4" y="159.6" width="568.2" height="456.6" fill="#003900"/><rect x="1345.1" y="159.6" width="1.2" height="456.6" fill="#ffff00"/><rect x="1912.6" y="159.6" width="1.4" height="456.6" fill="#ffff00"/><rect x="1339.6" y="615.5" width="4.6" height="1" fill="#111"/><rect x="1341.6" y="573.8" width="2.6" height="1" fill="#111"/><rect x="1341.6" y="532.1" width="2.6" height="1" fill="#111"/><rect x="1341.6" y="490.4" width="2.6" height="1" fill="#111"/><rect x="1341.6" y="448.7" width="2.6" height="1" fill="#111"/><rect x="1339.6" y="407.9" width="4.6" height="1" fill="#111"/><rect x="1341.6" y="365.3" width="2.6" height="1" fill="#111"/><rect x="1341.6" y="323.6" width="2.6" height="1" fill="#111"/><rect x="1341.6" y="281.9" width="2.6" height="1" fill="#111"/><rect x="1341.6" y="240.2" width="2.6" height="1" fill="#111"/><rect x="1339.6" y="198.5" width="4.6" height="1" fill="#111"/><text x="1339" y="408.9" font-size="6.5" text-anchor="end" fill="#111" stroke="#111" stroke-width="0.15">0.5</text><text x="1339" y="615.4" font-size="6.5" text-anchor="end" fill="#111" stroke="#111" stroke-width="0.15">0</text><text x="1327.2" y="181.6" font-size="6.4" fill="#2a2aff">*10</text><text x="1338.5" y="178.8" font-size="7" fill="#2a2aff">8</text><text x="1362" y="210" font-size="6" fill="#6f7d12">Detectors statistics displayed every 10 channels. Peaks mean a presence of: Energy_raw (0), Time_raw (1), E and T together (2)</text><text x="1345" y="250" font-size="11" fill="#e4e400">0</text><path d="M1353.5 616.2V505.5H1356.5V616.2M1361.5 616.2V566.5H1364.5V616.2M1369.5 616.2V397.5H1372.5V616.2M1377.5 616.2V503.5H1379.9V616.2M1386.5 616.2V398.5H1388.5V616.2M1394.5 616.2V565.5H1396.5V616.2M1402.5 616.2V516.5H1404.5V616.2M1410.5 616.2V590.5H1412.5V616.2M1418.5 616.2V503.5H1420.5V616.2M1426.5 616.2V389.5H1428.9V616.2M1434.5 616.2V394.5H1437.1V616.2M1442.5 616.2V427.5H1445.1V616.2M1450.5 616.2V558.5H1453.1V616.2M1459.5 616.2V564.5H1461.5V616.2M1467.5 616.2V506.5H1469.5V616.2M1515.5 616.2V428.5H1518.3V616.2M1524.5 616.2V518.5H1526.5V616.2M1532.5 616.2V219.5H1534.5V616.2M1540.5 616.2V390.5H1542.5V616.2M1548.5 616.2V212.5H1550.5V616.2M1556.5 616.2V508.5H1558.5V616.2M1564.5 616.2V424.5H1567.3V616.2M1572.5 616.2V513.5H1575.3V616.2M1580.5 616.2V399.5H1583.1V616.2M1588.5 616.2V217.5H1591.3V616.2M1597.5 616.2V228.5H1599.3V616.2M1605.9 616.2V218.5H1607.5V616.2M1613.5 616.2V511.5H1615.5V616.2M1621.7 616.2V544.5H1623.5V616.2M1629.7 616.2V431.5H1631.5V616.2" fill="none" stroke="#fff" stroke-width="1"/><rect x="1326.4" y="616.2" width="588.2" height="1.3" fill="#fff"/><rect x="1344.9" y="617.6" width="569.7" height="15.5" fill="#efebe7"/><path d="M1345.4 633.1V618.1H1914.6" fill="none" stroke="#7f7d7a" stroke-width="1"/><path d="M1344.9 632.6H1914.1V617.6" fill="none" stroke="#ffffff" stroke-width="1"/><rect x="1344.9" y="618.2" width="1" height="13.3" fill="#1a1a1a"/><rect x="1360.09" y="618.2" width="1.7" height="5.6" fill="#111"/><rect x="1376.68" y="618.2" width="1" height="6.6" fill="#111"/><rect x="1392.92" y="618.2" width="1" height="6.6" fill="#111"/><rect x="1408.81" y="618.2" width="1.7" height="5.6" fill="#111"/><rect x="1425.4" y="618.2" width="1" height="6.6" fill="#111"/><rect x="1441.64" y="618.2" width="1" height="6.6" fill="#111"/><rect x="1457.53" y="618.2" width="1.7" height="5.6" fill="#111"/><rect x="1474.12" y="618.2" width="1" height="6.6" fill="#111"/><rect x="1490.36" y="618.2" width="1" height="6.6" fill="#111"/><rect x="1506.25" y="618.2" width="1.7" height="5.6" fill="#111"/><rect x="1522.84" y="618.2" width="1" height="6.6" fill="#111"/><rect x="1539.08" y="618.2" width="1" height="6.6" fill="#111"/><rect x="1554.97" y="618.2" width="1.7" height="5.6" fill="#111"/><rect x="1571.56" y="618.2" width="1" height="6.6" fill="#111"/><rect x="1587.8" y="618.2" width="1" height="6.6" fill="#111"/><rect x="1603.69" y="618.2" width="1.7" height="5.6" fill="#111"/><rect x="1620.28" y="618.2" width="1" height="6.6" fill="#111"/><rect x="1636.52" y="618.2" width="1" height="6.6" fill="#111"/><rect x="1652.41" y="618.2" width="1.7" height="5.6" fill="#111"/><rect x="1669" y="618.2" width="1" height="6.6" fill="#111"/><rect x="1685.24" y="618.2" width="1" height="6.6" fill="#111"/><rect x="1701.13" y="618.2" width="1.7" height="5.6" fill="#111"/><rect x="1717.72" y="618.2" width="1" height="6.6" fill="#111"/><rect x="1733.96" y="618.2" width="1" height="6.6" fill="#111"/><rect x="1749.85" y="618.2" width="1.7" height="5.6" fill="#111"/><rect x="1766.44" y="618.2" width="1" height="6.6" fill="#111"/><rect x="1782.68" y="618.2" width="1" height="6.6" fill="#111"/><rect x="1798.57" y="618.2" width="1.7" height="5.6" fill="#111"/><rect x="1815.16" y="618.2" width="1" height="6.6" fill="#111"/><rect x="1831.4" y="618.2" width="1" height="6.6" fill="#111"/><rect x="1847.29" y="618.2" width="1.7" height="5.6" fill="#111"/><rect x="1863.88" y="618.2" width="1" height="6.6" fill="#111"/><rect x="1880.12" y="618.2" width="1" height="6.6" fill="#111"/><rect x="1896.01" y="618.2" width="1.7" height="5.6" fill="#111"/><rect x="1912.6" y="618.2" width="1" height="6.6" fill="#111"/><text x="1360.34" y="630.3" font-size="9.4" text-anchor="middle" fill="#161616" stroke="#161616" stroke-width="0.18" letter-spacing="0.22" class="cd">20</text><text x="1409.06" y="630.3" font-size="9.4" text-anchor="middle" fill="#161616" stroke="#161616" stroke-width="0.18" letter-spacing="0.22" class="cd">80</text><text x="1457.78" y="630.3" font-size="9.4" text-anchor="middle" fill="#161616" stroke="#161616" stroke-width="0.18" letter-spacing="0.22" class="cd">140</text><text x="1506.5" y="630.3" font-size="9.4" text-anchor="middle" fill="#161616" stroke="#161616" stroke-width="0.18" letter-spacing="0.22" class="cd">200</text><text x="1555.22" y="630.3" font-size="9.4" text-anchor="middle" fill="#161616" stroke="#161616" stroke-width="0.18" letter-spacing="0.22" class="cd">260</text><text x="1603.94" y="630.3" font-size="9.4" text-anchor="middle" fill="#161616" stroke="#161616" stroke-width="0.18" letter-spacing="0.22" class="cd">320</text><text x="1652.66" y="630.3" font-size="9.4" text-anchor="middle" fill="#161616" stroke="#161616" stroke-width="0.18" letter-spacing="0.22" class="cd">380</text><text x="1701.38" y="630.3" font-size="9.4" text-anchor="middle" fill="#161616" stroke="#161616" stroke-width="0.18" letter-spacing="0.22" class="cd">440</text><text x="1750.1" y="630.3" font-size="9.4" text-anchor="middle" fill="#161616" stroke="#161616" stroke-width="0.18" letter-spacing="0.22" class="cd">500</text><text x="1798.82" y="630.3" font-size="9.4" text-anchor="middle" fill="#161616" stroke="#161616" stroke-width="0.18" letter-spacing="0.22" class="cd">560</text><text x="1847.54" y="630.3" font-size="9.4" text-anchor="middle" fill="#161616" stroke="#161616" stroke-width="0.18" letter-spacing="0.22" class="cd">620</text><text x="1896.26" y="630.3" font-size="9.4" text-anchor="middle" fill="#161616" stroke="#161616" stroke-width="0.18" letter-spacing="0.22" class="cd">680</text><rect x="98" y="678.5" width="19.5" height="459" fill="#efebe7"/><path d="M98.5 1137.5V679H117.5" fill="none" stroke="#7f7d7a" stroke-width="1"/><path d="M98 1137H117V678.5" fill="none" stroke="#ffffff" stroke-width="1"/><rect x="117" y="679.3" width="568.2" height="457.4" fill="#003900"/><rect x="116.8" y="679.3" width="1.2" height="457.4" fill="#ffff00"/><rect x="676.2" y="679.3" width="1.1" height="457.4" fill="#ffff00"/><rect x="111.6" y="1135.9" width="4.6" height="1" fill="#111"/><text x="108.4" y="1136.2" font-size="6.5" text-anchor="end" fill="#111" stroke="#111" stroke-width="0.15">0</text><rect x="113.4" y="1130.74" width="2.4" height="1" fill="#111"/><rect x="113.4" y="1125.57" width="2.4" height="1" fill="#111"/><rect x="113.4" y="1120.41" width="2.4" height="1" fill="#111"/><rect x="113.4" y="1115.24" width="2.4" height="1" fill="#111"/><rect x="113.4" y="1110.08" width="2.4" height="1" fill="#111"/><rect x="113.4" y="1104.91" width="2.4" height="1" fill="#111"/><rect x="113.4" y="1099.75" width="2.4" height="1" fill="#111"/><rect x="113.4" y="1094.58" width="2.4" height="1" fill="#111"/><rect x="113.4" y="1089.42" width="2.4" height="1" fill="#111"/><rect x="111.6" y="1084.25" width="4.6" height="1" fill="#111"/><text x="108.4" y="1084.55" font-size="6.5" text-anchor="end" fill="#111" stroke="#111" stroke-width="0.15">1</text><rect x="113.4" y="1079.09" width="2.4" height="1" fill="#111"/><rect x="113.4" y="1073.92" width="2.4" height="1" fill="#111"/><rect x="113.4" y="1068.76" width="2.4" height="1" fill="#111"/><rect x="113.4" y="1063.59" width="2.4" height="1" fill="#111"/><rect x="113.4" y="1058.43" width="2.4" height="1" fill="#111"/><rect x="113.4" y="1053.26" width="2.4" height="1" fill="#111"/><rect x="113.4" y="1048.1" width="2.4" height="1" fill="#111"/><rect x="113.4" y="1042.93" width="2.4" height="1" fill="#111"/><rect x="113.4" y="1037.77" width="2.4" height="1" fill="#111"/><rect x="111.6" y="1032.6" width="4.6" height="1" fill="#111"/><text x="108.4" y="1032.9" font-size="6.5" text-anchor="end" fill="#111" stroke="#111" stroke-width="0.15">2</text><rect x="113.4" y="1027.44" width="2.4" height="1" fill="#111"/><rect x="113.4" y="1022.27" width="2.4" height="1" fill="#111"/><rect x="113.4" y="1017.11" width="2.4" height="1" fill="#111"/><rect x="113.4" y="1011.94" width="2.4" height="1" fill="#111"/><rect x="113.4" y="1006.78" width="2.4" height="1" fill="#111"/><rect x="113.4" y="1001.61" width="2.4" height="1" fill="#111"/><rect x="113.4" y="996.445" width="2.4" height="1" fill="#111"/><rect x="113.4" y="991.28" width="2.4" height="1" fill="#111"/><rect x="113.4" y="986.115" width="2.4" height="1" fill="#111"/><rect x="111.6" y="980.95" width="4.6" height="1" fill="#111"/><text x="108.4" y="981.25" font-size="6.5" text-anchor="end" fill="#111" stroke="#111" stroke-width="0.15">3</text><rect x="113.4" y="975.785" width="2.4" height="1" fill="#111"/><rect x="113.4" y="970.62" width="2.4" height="1" fill="#111"/><rect x="113.4" y="965.455" width="2.4" height="1" fill="#111"/><rect x="113.4" y="960.29" width="2.4" height="1" fill="#111"/><rect x="113.4" y="955.125" width="2.4" height="1" fill="#111"/><rect x="113.4" y="949.96" width="2.4" height="1" fill="#111"/><rect x="113.4" y="944.795" width="2.4" height="1" fill="#111"/><rect x="113.4" y="939.63" width="2.4" height="1" fill="#111"/><rect x="113.4" y="934.465" width="2.4" height="1" fill="#111"/><rect x="111.6" y="929.3" width="4.6" height="1" fill="#111"/><text x="108.4" y="929.6" font-size="6.5" text-anchor="end" fill="#111" stroke="#111" stroke-width="0.15">4</text><rect x="113.4" y="924.135" width="2.4" height="1" fill="#111"/><rect x="113.4" y="918.97" width="2.4" height="1" fill="#111"/><rect x="113.4" y="913.805" width="2.4" height="1" fill="#111"/><rect x="113.4" y="908.64" width="2.4" height="1" fill="#111"/><rect x="113.4" y="903.475" width="2.4" height="1" fill="#111"/><rect x="113.4" y="898.31" width="2.4" height="1" fill="#111"/><rect x="113.4" y="893.145" width="2.4" height="1" fill="#111"/><rect x="113.4" y="887.98" width="2.4" height="1" fill="#111"/><rect x="113.4" y="882.815" width="2.4" height="1" fill="#111"/><rect x="111.6" y="877.65" width="4.6" height="1" fill="#111"/><text x="108.4" y="877.95" font-size="6.5" text-anchor="end" fill="#111" stroke="#111" stroke-width="0.15">5</text><rect x="113.4" y="872.485" width="2.4" height="1" fill="#111"/><rect x="113.4" y="867.32" width="2.4" height="1" fill="#111"/><rect x="113.4" y="862.155" width="2.4" height="1" fill="#111"/><rect x="113.4" y="856.99" width="2.4" height="1" fill="#111"/><rect x="113.4" y="851.825" width="2.4" height="1" fill="#111"/><rect x="113.4" y="846.66" width="2.4" height="1" fill="#111"/><rect x="113.4" y="841.495" width="2.4" height="1" fill="#111"/><rect x="113.4" y="836.33" width="2.4" height="1" fill="#111"/><rect x="113.4" y="831.165" width="2.4" height="1" fill="#111"/><rect x="111.6" y="826" width="4.6" height="1" fill="#111"/><text x="108.4" y="826.3" font-size="6.5" text-anchor="end" fill="#111" stroke="#111" stroke-width="0.15">6</text><rect x="113.4" y="820.835" width="2.4" height="1" fill="#111"/><rect x="113.4" y="815.67" width="2.4" height="1" fill="#111"/><rect x="113.4" y="810.505" width="2.4" height="1" fill="#111"/><rect x="113.4" y="805.34" width="2.4" height="1" fill="#111"/><rect x="113.4" y="800.175" width="2.4" height="1" fill="#111"/><rect x="113.4" y="795.01" width="2.4" height="1" fill="#111"/><rect x="113.4" y="789.845" width="2.4" height="1" fill="#111"/><rect x="113.4" y="784.68" width="2.4" height="1" fill="#111"/><rect x="113.4" y="779.515" width="2.4" height="1" fill="#111"/><rect x="111.6" y="774.35" width="4.6" height="1" fill="#111"/><text x="108.4" y="774.65" font-size="6.5" text-anchor="end" fill="#111" stroke="#111" stroke-width="0.15">7</text><rect x="113.4" y="769.185" width="2.4" height="1" fill="#111"/><rect x="113.4" y="764.02" width="2.4" height="1" fill="#111"/><rect x="113.4" y="758.855" width="2.4" height="1" fill="#111"/><rect x="113.4" y="753.69" width="2.4" height="1" fill="#111"/><rect x="113.4" y="748.525" width="2.4" height="1" fill="#111"/><rect x="113.4" y="743.36" width="2.4" height="1" fill="#111"/><rect x="113.4" y="738.195" width="2.4" height="1" fill="#111"/><rect x="113.4" y="733.03" width="2.4" height="1" fill="#111"/><rect x="113.4" y="727.865" width="2.4" height="1" fill="#111"/><rect x="111.6" y="722.7" width="4.6" height="1" fill="#111"/><rect x="113.4" y="717.535" width="2.4" height="1" fill="#111"/><rect x="113.4" y="712.37" width="2.4" height="1" fill="#111"/><rect x="113.4" y="707.205" width="2.4" height="1" fill="#111"/><rect x="113.4" y="702.04" width="2.4" height="1" fill="#111"/><rect x="113.4" y="696.875" width="2.4" height="1" fill="#111"/><rect x="113.4" y="691.71" width="2.4" height="1" fill="#111"/><rect x="113.4" y="686.545" width="2.4" height="1" fill="#111"/><rect x="113.4" y="681.38" width="2.4" height="1" fill="#111"/><text x="98.8" y="701.3" font-size="6.4" fill="#2a2aff">*10</text><text x="110.1" y="698.5" font-size="7" fill="#2a2aff">6</text><text x="134" y="734.6" font-size="11" fill="#7c7e10">Statistics of Neda detectors which fired</text><text x="118.6" y="769.6" font-size="11" fill="#e4e400">-0.5</text><clipPath id="c4"><rect x="117" y="679.3" width="568.2" height="457.4"/></clipPath><text x="676.2" y="724" font-size="11" fill="#e4e400" clip-path="url(#c4)">62.5</text><path d="M117.1 841V841.5H126.5V879.5H135.5V901.5H144.5V888.5H152.5V865.5H161.5V870.5H170.5V887.5H179.5V862.5H188.5V812.5H197.5V802.5H206.5V756.5H215.5V784.5H224.5V738.5H232.5V807.5H241.5V746.5H250.5V742.5H259.5V748.5H268.5V745.5H277.5V774.5H286.5V742.5H295.5V740.5H304.5V734.5H313.5V944.5H322.5V914.5H330.5V990.5H339.5V958.5H348.5V958.5H357.5V1016.5H366.5V910.5H375.5V982.5H384.5V952.5H393.5V905.5H402.5V912.5H410.5V982.5H419.5V902.5H428.5V918.5H437.5V996.5H446.5V888.5H455.5V952.5H464.5V928.5H473.5V896.5H482.5V942.5H491.5V926.5H500.5V891.5H508.5V964.5H517.5V948.5H526.5V924.5H535.5V942.5H544.5V926.5H553.5V904.5H562.5V944.5H571.5V912.5H580.5V1136.7" fill="none" stroke="#fff" stroke-width="1"/><path d="M580.5 1136.6H685.2" stroke="#fff" stroke-width="1"/><rect x="98" y="1136.6" width="588.2" height="1.3" fill="#fff"/><rect x="116.5" y="1138" width="569.7" height="14.7" fill="#efebe7"/><path d="M117 1152.7V1138.5H686.2" fill="none" stroke="#7f7d7a" stroke-width="1"/><path d="M116.5 1152.2H685.7V1138" fill="none" stroke="#ffffff" stroke-width="1"/><rect x="116.5" y="1138.6" width="1" height="12.5" fill="#1a1a1a"/><rect x="121.7" y="1138.6" width="1" height="6.6" fill="#111"/><rect x="139.15" y="1138.6" width="1.7" height="5.6" fill="#111"/><rect x="157.3" y="1138.6" width="1" height="6.6" fill="#111"/><rect x="174.75" y="1138.6" width="1.7" height="5.6" fill="#111"/><rect x="192.9" y="1138.6" width="1" height="6.6" fill="#111"/><rect x="210.35" y="1138.6" width="1.7" height="5.6" fill="#111"/><rect x="228.5" y="1138.6" width="1" height="6.6" fill="#111"/><rect x="245.95" y="1138.6" width="1.7" height="5.6" fill="#111"/><rect x="264.1" y="1138.6" width="1" height="6.6" fill="#111"/><rect x="281.55" y="1138.6" width="1.7" height="5.6" fill="#111"/><rect x="299.7" y="1138.6" width="1" height="6.6" fill="#111"/><rect x="317.15" y="1138.6" width="1.7" height="5.6" fill="#111"/><rect x="335.3" y="1138.6" width="1" height="6.6" fill="#111"/><rect x="352.75" y="1138.6" width="1.7" height="5.6" fill="#111"/><rect x="370.9" y="1138.6" width="1" height="6.6" fill="#111"/><rect x="388.35" y="1138.6" width="1.7" height="5.6" fill="#111"/><rect x="406.5" y="1138.6" width="1" height="6.6" fill="#111"/><rect x="423.95" y="1138.6" width="1.7" height="5.6" fill="#111"/><rect x="442.1" y="1138.6" width="1" height="6.6" fill="#111"/><rect x="459.55" y="1138.6" width="1.7" height="5.6" fill="#111"/><rect x="477.7" y="1138.6" width="1" height="6.6" fill="#111"/><rect x="495.15" y="1138.6" width="1.7" height="5.6" fill="#111"/><rect x="513.3" y="1138.6" width="1" height="6.6" fill="#111"/><rect x="530.75" y="1138.6" width="1.7" height="5.6" fill="#111"/><rect x="548.9" y="1138.6" width="1" height="6.6" fill="#111"/><rect x="566.35" y="1138.6" width="1.7" height="5.6" fill="#111"/><rect x="584.5" y="1138.6" width="1" height="6.6" fill="#111"/><rect x="601.95" y="1138.6" width="1.7" height="5.6" fill="#111"/><rect x="620.1" y="1138.6" width="1" height="6.6" fill="#111"/><rect x="637.55" y="1138.6" width="1.7" height="5.6" fill="#111"/><rect x="655.7" y="1138.6" width="1" height="6.6" fill="#111"/><rect x="673.15" y="1138.6" width="1.7" height="5.6" fill="#111"/><text x="138.8" y="1149.9" font-size="9.4" text-anchor="middle" fill="#161616" stroke="#161616" stroke-width="0.18" letter-spacing="0.22" class="cd">2</text><text x="174.4" y="1149.9" font-size="9.4" text-anchor="middle" fill="#161616" stroke="#161616" stroke-width="0.18" letter-spacing="0.22" class="cd">6</text><text x="210" y="1149.9" font-size="9.4" text-anchor="middle" fill="#161616" stroke="#161616" stroke-width="0.18" letter-spacing="0.22" class="cd">10</text><text x="245.6" y="1149.9" font-size="9.4" text-anchor="middle" fill="#161616" stroke="#161616" stroke-width="0.18" letter-spacing="0.22" class="cd">14</text><text x="281.2" y="1149.9" font-size="9.4" text-anchor="middle" fill="#161616" stroke="#161616" stroke-width="0.18" letter-spacing="0.22" class="cd">18</text><text x="316.8" y="1149.9" font-size="9.4" text-anchor="middle" fill="#161616" stroke="#161616" stroke-width="0.18" letter-spacing="0.22" class="cd">22</text><text x="352.4" y="1149.9" font-size="9.4" text-anchor="middle" fill="#161616" stroke="#161616" stroke-width="0.18" letter-spacing="0.22" class="cd">26</text><text x="388" y="1149.9" font-size="9.4" text-anchor="middle" fill="#161616" stroke="#161616" stroke-width="0.18" letter-spacing="0.22" class="cd">30</text><text x="423.6" y="1149.9" font-size="9.4" text-anchor="middle" fill="#161616" stroke="#161616" stroke-width="0.18" letter-spacing="0.22" class="cd">34</text><text x="459.2" y="1149.9" font-size="9.4" text-anchor="middle" fill="#161616" stroke="#161616" stroke-width="0.18" letter-spacing="0.22" class="cd">38</text><text x="494.8" y="1149.9" font-size="9.4" text-anchor="middle" fill="#161616" stroke="#161616" stroke-width="0.18" letter-spacing="0.22" class="cd">42</text><text x="530.4" y="1149.9" font-size="9.4" text-anchor="middle" fill="#161616" stroke="#161616" stroke-width="0.18" letter-spacing="0.22" class="cd">46</text><text x="566" y="1149.9" font-size="9.4" text-anchor="middle" fill="#161616" stroke="#161616" stroke-width="0.18" letter-spacing="0.22" class="cd">50</text><text x="601.6" y="1149.9" font-size="9.4" text-anchor="middle" fill="#161616" stroke="#161616" stroke-width="0.18" letter-spacing="0.22" class="cd">54</text><text x="637.2" y="1149.9" font-size="9.4" text-anchor="middle" fill="#161616" stroke="#161616" stroke-width="0.18" letter-spacing="0.22" class="cd">58</text><text x="672.8" y="1149.9" font-size="9.4" text-anchor="middle" fill="#161616" stroke="#161616" stroke-width="0.18" letter-spacing="0.22" class="cd">62</text><rect x="712.2" y="678.5" width="19.5" height="459" fill="#efebe7"/><path d="M712.7 1137.5V679H731.7" fill="none" stroke="#7f7d7a" stroke-width="1"/><path d="M712.2 1137H731.2V678.5" fill="none" stroke="#ffffff" stroke-width="1"/><rect x="731.2" y="679.3" width="568" height="457.4" fill="#003900"/><rect x="731" y="679.3" width="1.2" height="457.4" fill="#ffff00"/><rect x="1297.6" y="679.3" width="1.4" height="457.4" fill="#ffff00"/><rect x="725.6" y="1135.9" width="4.6" height="1" fill="#111"/><text x="722.8" y="1136.2" font-size="6.5" text-anchor="end" fill="#111" stroke="#111" stroke-width="0.15">0</text><rect x="727.6" y="1124.77" width="2.6" height="1" fill="#111"/><rect x="727.6" y="1113.64" width="2.6" height="1" fill="#111"/><rect x="727.6" y="1102.51" width="2.6" height="1" fill="#111"/><rect x="727.6" y="1091.38" width="2.6" height="1" fill="#111"/><rect x="727.6" y="1080.25" width="2.6" height="1" fill="#111"/><rect x="727.6" y="1069.12" width="2.6" height="1" fill="#111"/><rect x="727.6" y="1057.99" width="2.6" height="1" fill="#111"/><rect x="727.6" y="1046.86" width="2.6" height="1" fill="#111"/><rect x="727.6" y="1035.73" width="2.6" height="1" fill="#111"/><rect x="725.6" y="1024.6" width="4.6" height="1" fill="#111"/><text x="722.8" y="1024.9" font-size="6.5" text-anchor="end" fill="#111" stroke="#111" stroke-width="0.15">1</text><rect x="727.6" y="1013.47" width="2.6" height="1" fill="#111"/><rect x="727.6" y="1002.34" width="2.6" height="1" fill="#111"/><rect x="727.6" y="991.21" width="2.6" height="1" fill="#111"/><rect x="727.6" y="980.08" width="2.6" height="1" fill="#111"/><rect x="727.6" y="968.95" width="2.6" height="1" fill="#111"/><rect x="727.6" y="957.82" width="2.6" height="1" fill="#111"/><rect x="727.6" y="946.69" width="2.6" height="1" fill="#111"/><rect x="727.6" y="935.56" width="2.6" height="1" fill="#111"/><rect x="727.6" y="924.43" width="2.6" height="1" fill="#111"/><rect x="725.6" y="913.3" width="4.6" height="1" fill="#111"/><text x="722.8" y="913.6" font-size="6.5" text-anchor="end" fill="#111" stroke="#111" stroke-width="0.15">2</text><rect x="727.6" y="902.17" width="2.6" height="1" fill="#111"/><rect x="727.6" y="891.04" width="2.6" height="1" fill="#111"/><rect x="727.6" y="879.91" width="2.6" height="1" fill="#111"/><rect x="727.6" y="868.78" width="2.6" height="1" fill="#111"/><rect x="727.6" y="857.65" width="2.6" height="1" fill="#111"/><rect x="727.6" y="846.52" width="2.6" height="1" fill="#111"/><rect x="727.6" y="835.39" width="2.6" height="1" fill="#111"/><rect x="727.6" y="824.26" width="2.6" height="1" fill="#111"/><rect x="727.6" y="813.13" width="2.6" height="1" fill="#111"/><rect x="725.6" y="802" width="4.6" height="1" fill="#111"/><text x="722.8" y="802.3" font-size="6.5" text-anchor="end" fill="#111" stroke="#111" stroke-width="0.15">3</text><rect x="727.6" y="790.87" width="2.6" height="1" fill="#111"/><rect x="727.6" y="779.74" width="2.6" height="1" fill="#111"/><rect x="727.6" y="768.61" width="2.6" height="1" fill="#111"/><rect x="727.6" y="757.48" width="2.6" height="1" fill="#111"/><rect x="727.6" y="746.35" width="2.6" height="1" fill="#111"/><rect x="727.6" y="735.22" width="2.6" height="1" fill="#111"/><rect x="727.6" y="724.09" width="2.6" height="1" fill="#111"/><rect x="727.6" y="712.96" width="2.6" height="1" fill="#111"/><rect x="727.6" y="701.83" width="2.6" height="1" fill="#111"/><rect x="725.6" y="690.7" width="4.6" height="1" fill="#111"/><rect x="727.6" y="679.57" width="2.6" height="1" fill="#111"/><text x="713" y="701.3" font-size="6.4" fill="#2a2aff">*10</text><text x="724.3" y="698.5" font-size="7" fill="#2a2aff">4</text><text x="748.2" y="734.6" font-size="11" fill="#7c7e10">This graph moves left, just like a paper tape</text><text x="732.6" y="769.6" font-size="11" fill="#e4e400">0</text><path class="ce" d="M946.5 1136.7V1089.5H947.5V1122.5H948.5V922.5H949.5V1055.5H950.5V895.5H951.5V1047.5H952.5V1020.5H953.5V926.5H954.5V1080.5H955.5V952.5H956.5V1065.5H957.5V956.5H958.5V1040.5H959.5V960.5H960.5V1050.5H961.5V963.5H962.5V1085.5H963.5V878.5H964.5V1075.5H965.5V891.5H966.5V1010.5H967.5V959.5H968.5V1136.5H969.5V900.5H970.5V1070.5H971.5V891.5H972.5V1047.5H973.5V969.5H974.5V1100.5H975.5V891.5H976.5V1075.5H977.5V944.5H978.5V1102.5H979.5V937.5H980.5V1102.5H981.5V955.5H982.5V1085.5H983.5V975.5H984.5V844.5H985.5V1104.5H986.5V982.5H987.5V1040.5H988.5V1070.5H989.5V960.5H990.5V1005.5H991.5V951.5H992.5V1136.5H993.5V890.5H994.5V1031.5H995.5V949.5H996.5V878.5H997.5V1042.5H998.5V1056.5H999.5V1030.5H1000.5V903.5H1001.5V1092.5H1002.5V926.5H1003.5V1093.5H1004.5V1108.5H1005.5V1136.5H1006.5V1136.7M1230.5 1136.7V1063.5H1231.5V905.5H1232.5V1136.5H1233.5V935.5H1234.5V1015.5H1235.5V1025.5H1236.5V1000.5H1237.5V923.5H1238.5V1086.5H1239.5V985.5H1240.5V1005.5H1241.5V953.5H1242.5V1053.5H1243.5V965.5H1244.5V1046.5H1245.5V970.5H1246.5V1020.5H1247.5V954.5H1248.5V1047.5H1249.5V868.5H1250.5V1136.5H1251.5V885.5H1252.5V1097.5H1253.5V1088.5H1254.5V1136.5H1255.5V1136.7" fill="none" stroke="#fff" stroke-width="1"/><rect x="712.2" y="1136.6" width="588" height="1.3" fill="#fff"/><rect x="730.7" y="1138" width="569.5" height="14.7" fill="#efebe7"/><path d="M731.2 1152.7V1138.5H1300.2" fill="none" stroke="#7f7d7a" stroke-width="1"/><path d="M730.7 1152.2H1299.7V1138" fill="none" stroke="#ffffff" stroke-width="1"/><rect x="730.7" y="1138.6" width="1" height="12.5" fill="#1a1a1a"/><rect x="762.68" y="1138.6" width="1.7" height="5.6" fill="#111"/><rect x="794.56" y="1138.6" width="1" height="6.6" fill="#111"/><rect x="825.74" y="1138.6" width="1.7" height="5.6" fill="#111"/><rect x="857.62" y="1138.6" width="1" height="6.6" fill="#111"/><rect x="888.8" y="1138.6" width="1.7" height="5.6" fill="#111"/><rect x="920.68" y="1138.6" width="1" height="6.6" fill="#111"/><rect x="951.86" y="1138.6" width="1.7" height="5.6" fill="#111"/><rect x="983.74" y="1138.6" width="1" height="6.6" fill="#111"/><rect x="1014.92" y="1138.6" width="1.7" height="5.6" fill="#111"/><rect x="1046.8" y="1138.6" width="1" height="6.6" fill="#111"/><rect x="1077.98" y="1138.6" width="1.7" height="5.6" fill="#111"/><rect x="1109.86" y="1138.6" width="1" height="6.6" fill="#111"/><rect x="1141.04" y="1138.6" width="1.7" height="5.6" fill="#111"/><rect x="1172.92" y="1138.6" width="1" height="6.6" fill="#111"/><rect x="1204.1" y="1138.6" width="1.7" height="5.6" fill="#111"/><rect x="1235.98" y="1138.6" width="1" height="6.6" fill="#111"/><rect x="1267.16" y="1138.6" width="1.7" height="5.6" fill="#111"/><rect x="1299.04" y="1138.6" width="1" height="6.6" fill="#111"/><text x="762.93" y="1149.9" font-size="9.4" text-anchor="middle" fill="#161616" stroke="#161616" stroke-width="0.18" letter-spacing="0.22" class="cd">200</text><text x="825.99" y="1149.9" font-size="9.4" text-anchor="middle" fill="#161616" stroke="#161616" stroke-width="0.18" letter-spacing="0.22" class="cd">600</text><text x="889.05" y="1149.9" font-size="9.4" text-anchor="middle" fill="#161616" stroke="#161616" stroke-width="0.18" letter-spacing="0.22" class="cd">1000</text><text x="952.11" y="1149.9" font-size="9.4" text-anchor="middle" fill="#161616" stroke="#161616" stroke-width="0.18" letter-spacing="0.22" class="cd">1400</text><text x="1015.17" y="1149.9" font-size="9.4" text-anchor="middle" fill="#161616" stroke="#161616" stroke-width="0.18" letter-spacing="0.22" class="cd">1800</text><text x="1078.23" y="1149.9" font-size="9.4" text-anchor="middle" fill="#161616" stroke="#161616" stroke-width="0.18" letter-spacing="0.22" class="cd">2200</text><text x="1141.29" y="1149.9" font-size="9.4" text-anchor="middle" fill="#161616" stroke="#161616" stroke-width="0.18" letter-spacing="0.22" class="cd">2600</text><text x="1204.35" y="1149.9" font-size="9.4" text-anchor="middle" fill="#161616" stroke="#161616" stroke-width="0.18" letter-spacing="0.22" class="cd">3000</text><text x="1267.41" y="1149.9" font-size="9.4" text-anchor="middle" fill="#161616" stroke="#161616" stroke-width="0.18" letter-spacing="0.22" class="cd">3400</text></svg>
<div class="a" style="left:1936px;top:127px;width:14.5px;height:198px;background:linear-gradient(90deg,#fbfaf9,#f1eeea);border-left:1px solid #c5c1bc"></div>
<div class="a" style="left:1936px;top:138.5px;width:14.5px;height:1px;background:#c5c1bc"></div>
<div class="a" style="left:1936px;top:311.5px;width:14.5px;height:1px;background:#c5c1bc"></div>
<svg style="left:1936px;top:127px" width="15" height="198" viewBox="1936 127 15 198"><path d="M1939 134.6H1947L1943 129.8Z" fill="#555"/><path d="M1939 315.4H1947L1943 320.2Z" fill="#555"/></svg>
</body></html>
